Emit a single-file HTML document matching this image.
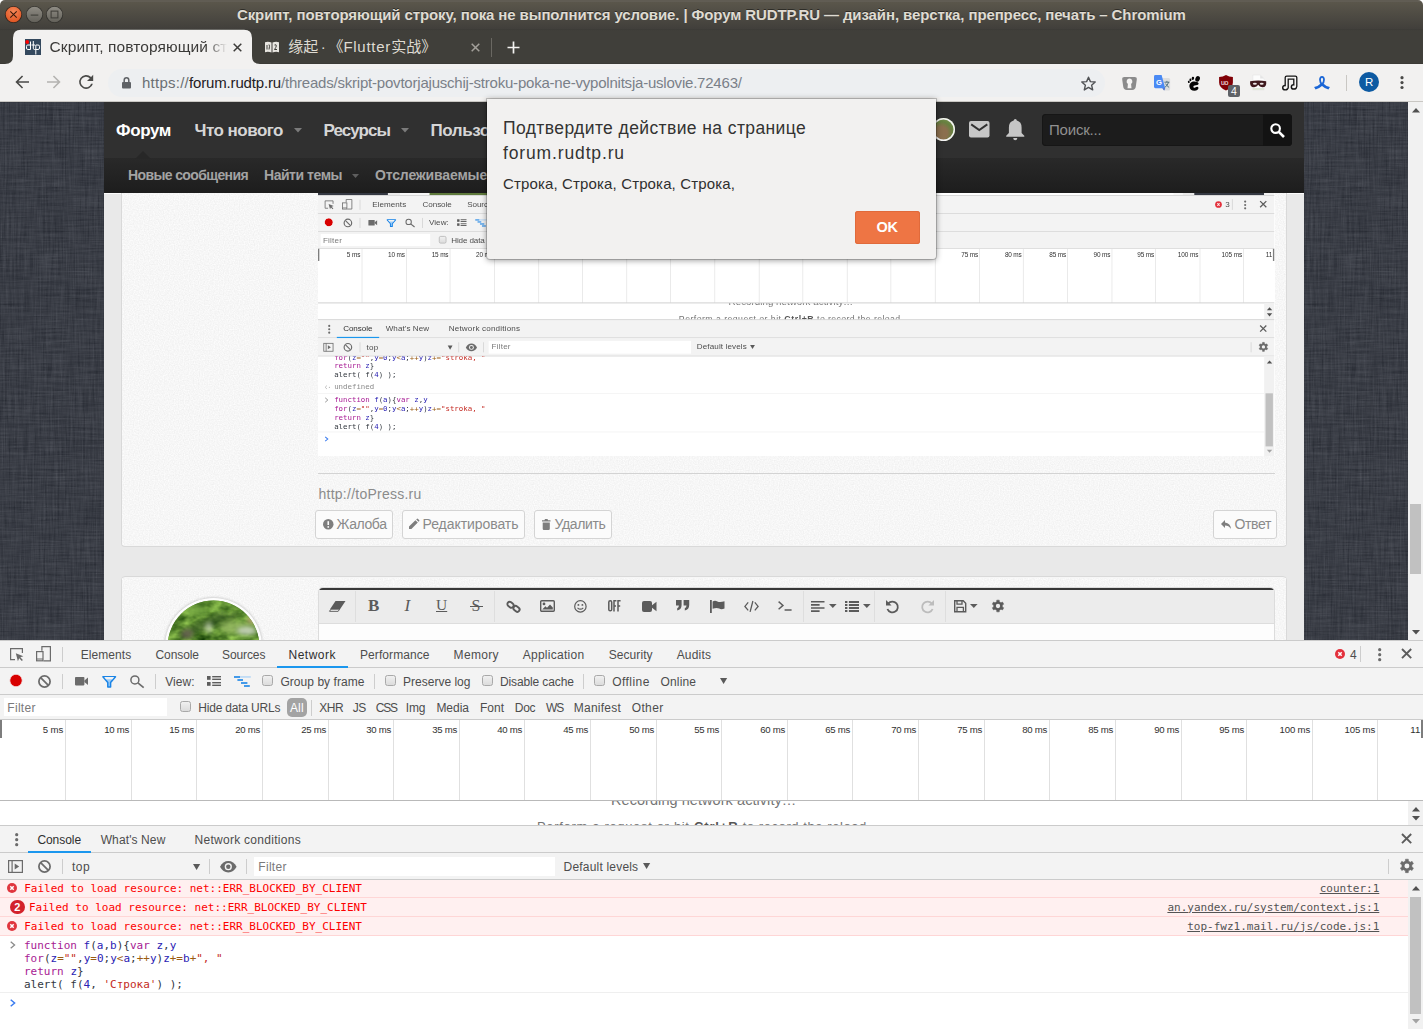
<!DOCTYPE html>
<html lang='ru'><head><meta charset='utf-8'><title>Скрипт, повторяющий строку, пока не выполнится условие. | Форум RUDTP.RU</title><style>
html,body{margin:0;padding:0}
body{width:1423px;height:1029px;overflow:hidden;position:relative;background:#fff;font-family:"Liberation Sans","Noto Sans CJK SC",sans-serif;-webkit-font-smoothing:antialiased}
.a{position:absolute}
.t{position:absolute;white-space:pre;line-height:20px;height:20px}
.m{font-family:"DejaVu Sans Mono","Liberation Mono",monospace;font-size:11px}
svg{overflow:visible}
.emb .t{margin-top:-1.1px}
.emb .t.m{margin-top:-.3px}
</style></head><body>
<div class=a style='left:0px;top:102px;width:1408px;height:540px;background:#383c46;'></div>
<svg class=a style='left:0px;top:102px;' width='104' height='538' viewBox='0 0 104 538'><filter id='ln0' x='0' y='0' width='100%' height='100%' color-interpolation-filters='sRGB'><feTurbulence type='fractalNoise' baseFrequency='0.55 0.028' numOctaves='4' seed='4' result='v'/><feTurbulence type='fractalNoise' baseFrequency='0.028 0.55' numOctaves='4' seed='9' result='h'/><feComposite in='v' in2='h' operator='arithmetic' k1='0' k2='.5' k3='.5' k4='0'/><feColorMatrix type='matrix' values='0.21 0 0 0 0.121 0.21 0 0 0 0.134 0.21 0 0 0 0.167 0 0 0 0 1'/></filter><rect width='104' height='538' filter='url(#ln0)'/></svg>
<svg class=a style='left:1304px;top:102px;' width='104' height='538' viewBox='0 0 104 538'><filter id='ln1304' x='0' y='0' width='100%' height='100%' color-interpolation-filters='sRGB'><feTurbulence type='fractalNoise' baseFrequency='0.55 0.028' numOctaves='4' seed='4' result='v'/><feTurbulence type='fractalNoise' baseFrequency='0.028 0.55' numOctaves='4' seed='9' result='h'/><feComposite in='v' in2='h' operator='arithmetic' k1='0' k2='.5' k3='.5' k4='0'/><feColorMatrix type='matrix' values='0.21 0 0 0 0.121 0.21 0 0 0 0.134 0.21 0 0 0 0.167 0 0 0 0 1'/></filter><rect width='104' height='538' filter='url(#ln1304)'/></svg>
<div class=a style='left:1408px;top:102px;width:15px;height:538px;background:#f1f1f1;'></div><svg class=a style='left:1411.5px;top:108px;' width='8' height='4.5' viewBox='0 0 8 4.5'><path d='M0 4.5L4 0 8 4.5Z' fill='#505050'/></svg><svg class=a style='left:1411.5px;top:629.5px;' width='8' height='4.5' viewBox='0 0 8 4.5'><path d='M0 0L4 4.5 8 0Z' fill='#505050'/></svg><div class=a style='left:1410px;top:504px;width:11px;height:70px;background:#c1c1c1;'></div>
<div class=a style='left:104px;top:102px;width:1200px;height:56px;background:#303030;'></div>
<div class=a style='left:104px;top:158px;width:1200px;height:34.5px;background:linear-gradient(#292929,#1d1d1d);'></div>
<span class=t style='left:116px;top:120.6px;font-size:17px;font-weight:700;color:#fff;letter-spacing:-0.38px;'>Форум</span>
<span class=t style='left:194.5px;top:120.6px;font-size:17px;font-weight:700;color:#d6d6d6;letter-spacing:-0.52px;'>Что нового</span>
<span class=t style='left:323.5px;top:120.6px;font-size:17px;font-weight:700;color:#d6d6d6;letter-spacing:-0.96px;'>Ресурсы</span>
<span class=t style='left:430.5px;top:120.6px;font-size:17px;font-weight:700;color:#d6d6d6;letter-spacing:-0.42px;'>Пользователи</span>
<svg class=a style='left:294px;top:128px;' width='8' height='4.5' viewBox='0 0 8 4.5'><path d='M0 0L4 4.5 8 0Z' fill='#7b7b7b'/></svg>
<svg class=a style='left:401px;top:128px;' width='8' height='4.5' viewBox='0 0 8 4.5'><path d='M0 0L4 4.5 8 0Z' fill='#7b7b7b'/></svg>
<svg class=a style='left:135px;top:150.5px;' width='16' height='8' viewBox='0 0 16 8'><path d='M0 8L8 0 16 8Z' fill='#272727'/></svg>
<span class=t style='left:128px;top:165.4px;font-size:14px;font-weight:700;color:#a3a3a3;letter-spacing:-0.62px;'>Новые сообщения</span>
<span class=t style='left:264px;top:165.4px;font-size:14px;font-weight:700;color:#a3a3a3;letter-spacing:-0.46px;'>Найти темы</span>
<svg class=a style='left:351.5px;top:173.5px;' width='7' height='4' viewBox='0 0 7 4'><path d='M0 0L3.5 4 7 0Z' fill='#5e5e5e'/></svg>
<span class=t style='left:375px;top:165.4px;font-size:14px;font-weight:700;color:#a3a3a3;letter-spacing:-0.16px;'>Отслеживаемые</span>
<div class=a style='left:932px;top:118px;width:23px;height:23px;background:#6f7f4a;border-radius:50%;box-shadow:0 0 0 1.5px #f4f4f4 inset;background:radial-gradient(circle at 40% 65%,#8b6f4e 0 30%,#66803f 55%,#8fa565 100%)'></div>
<svg class=a style='left:968.5px;top:120.5px;' width='20.5' height='16.5' viewBox='0 0 20.5 16.5'><path d='M2 0H18.5Q20.5 0 20.5 2V14.5Q20.5 16.5 18.5 16.5H2Q0 16.5 0 14.5V2Q0 0 2 0Z' fill='#c6c6c6'/><path d='M2.2 3.4L10.25 9 18.3 3.4' fill='none' stroke='#303030' stroke-width='1.9'/></svg>
<svg class=a style='left:1006px;top:118.5px;' width='18.5' height='21.5' viewBox='0 0 18.5 21.5'><path d='M9.25 0Q10.8 0 10.8 1.6Q15.6 2.8 15.6 8.6V14L18.3 16.7V17.7H.2V16.7L2.9 14V8.6Q2.9 2.8 7.7 1.6Q7.7 0 9.25 0ZM7.2 19H11.3Q11.2 21.3 9.25 21.3Q7.3 21.3 7.2 19Z' fill='#c6c6c6'/></svg>
<div class=a style='left:1042px;top:114px;width:250px;height:31.5px;background:#1c1c1c;border-radius:4px;box-shadow:0 0 0 1px #161616 inset'></div>
<div class=a style='left:1263px;top:114px;width:29px;height:31.5px;background:#131313;border-radius:0 4px 4px 0'></div>
<span class=t style='left:1049px;top:120px;font-size:15px;color:#909090;letter-spacing:-0.20px;'>Поиск...</span>
<svg class=a style='left:1269.5px;top:122.5px;' width='15' height='15' viewBox='0 0 15 15'><circle cx='5.6' cy='5.6' r='4.3' fill='none' stroke='#fff' stroke-width='2.1'/><path d='M8.8 8.8L14 14' stroke='#fff' stroke-width='2.6'/></svg>
<div class=a style='left:104px;top:192.5px;width:1200px;height:449px;background:#e9e9e9;'></div>
<div class=a style='left:104px;top:192.5px;width:1200px;height:1px;background:#fdfdfd;'></div>
<div class=a style='left:121px;top:193px;width:1166px;height:354px;background:#f6f6f6;border:1px solid #d9d9d9;box-sizing:border-box;border-top:0;border-radius:0 0 4px 4px'></div>
<svg class=a style='left:122px;top:193px;' width='1164' height='352' viewBox='0 0 1164 352'><filter id='ppa' x='0' y='0' width='100%' height='100%' color-interpolation-filters='sRGB'><feTurbulence type='fractalNoise' baseFrequency='0.8' numOctaves='1' seed='3'/><feColorMatrix type='matrix' values='0.09 0 0 0 0.921 0.09 0 0 0 0.921 0.09 0 0 0 0.921 0 0 0 0 1'/></filter><rect width='1164' height='352' filter='url(#ppa)'/></svg>
<div class=a style='left:318.3px;top:192.5px;width:956.3px;height:263.5px;overflow:hidden;background:#fff'><div class='a emb' style='left:0;top:-427.716px;width:1423px;height:1029px;transform:scale(0.672);transform-origin:0 0'><div class=a style='left:0px;top:630px;width:1408px;height:11px;background:#353943;'></div><div class=a style='left:104px;top:630px;width:1200px;height:11px;background:#e9e9e9;'></div><div class=a style='left:121.5px;top:630px;width:1165px;height:11px;background:#f6f6f6;'></div><div class=a style='left:166px;top:630px;width:95px;height:11px;background:#5f7a3c;'></div><div class=a style='left:319px;top:630px;width:954px;height:11px;background:#fff;'></div><div class=a style='left:1408px;top:630px;width:15px;height:11px;background:#f1f1f1;'></div><div class=a style='left:0px;top:640px;width:1423px;height:389px;background:#fff;'></div>
<div class=a style='left:0px;top:640px;width:1423px;height:28px;background:#f3f3f3;'></div>
<div class=a style='left:0px;top:640px;width:1423px;height:1px;background:#cbcbcb;'></div>
<div class=a style='left:0px;top:667px;width:1423px;height:1px;background:#cbcbcb;'></div>
<svg class=a style='left:9.5px;top:648px;' width='14' height='13' viewBox='0 0 14 13'><path d='M12.4 5V.6H.6V11.6H5' fill='none' stroke='#6b6b6b' stroke-width='1.2'/><path d='M5.8 5.2L13.4 8.2 10.3 9.3 12.9 12 11.8 13 9.2 10.3 7.9 13.2Z' fill='#6b6b6b'/></svg>
<svg class=a style='left:36px;top:646px;' width='15' height='15.5' viewBox='0 0 15 15.5'><path d='M5.9 4.8V.6H14.4V14.8H7.6' fill='none' stroke='#6b6b6b' stroke-width='1.2'/><rect x='.6' y='5.6' width='6.4' height='9.2' fill='none' stroke='#6b6b6b' stroke-width='1.2'/><path d='M.6 13H7' stroke='#6b6b6b' stroke-width='1'/></svg>
<div class=a style='left:62px;top:646.5px;width:1px;height:15px;background:#cdcdcd;'></div>
<span class=t style='left:80.7px;top:644.5px;font-size:12px;color:#4d4d4d;letter-spacing:0.07px;'>Elements</span>
<span class=t style='left:155.5px;top:644.5px;font-size:12px;color:#4d4d4d;letter-spacing:-0.08px;'>Console</span>
<span class=t style='left:222px;top:644.5px;font-size:12px;color:#4d4d4d;letter-spacing:-0.10px;'>Sources</span>
<span class=t style='left:288.5px;top:644.5px;font-size:12px;color:#2f2f2f;letter-spacing:0.50px;'>Network</span>
<span class=t style='left:360px;top:644.5px;font-size:12px;color:#4d4d4d;letter-spacing:0.08px;'>Performance</span>
<span class=t style='left:453.6px;top:644.5px;font-size:12px;color:#4d4d4d;letter-spacing:0.33px;'>Memory</span>
<span class=t style='left:522.7px;top:644.5px;font-size:12px;color:#4d4d4d;letter-spacing:0.27px;'>Application</span>
<span class=t style='left:608.7px;top:644.5px;font-size:12px;color:#4d4d4d;letter-spacing:0.08px;'>Security</span>
<span class=t style='left:676.7px;top:644.5px;font-size:12px;color:#4d4d4d;letter-spacing:0.17px;'>Audits</span>
<div class=a style='left:277px;top:666px;width:71px;height:2px;background:#1b97ee;'></div>
<svg class=a style='left:1334.8px;top:649.3px;' width='10' height='10' viewBox='0 0 10 10'><circle cx='5' cy='5' r='5' fill='#e3313c'/><path d='M3.3 3.3L6.7 6.7M6.7 3.3L3.3 6.7' stroke='#fff' stroke-width='1.5' fill='none'/></svg>
<span class=t style='left:1350px;top:644.6px;font-size:12px;color:#4d4d4d;'>3</span>
<div class=a style='left:1360px;top:646.3px;width:1px;height:15.5px;background:#cdcdcd;'></div>
<svg class=a style='left:1377.8px;top:647.8px;' width='3.4' height='13.4' viewBox='0 0 3.4 13.4'><circle cx='1.7' cy='1.7' r='1.6' fill='#6b6b6b'/><circle cx='1.7' cy='6.7' r='1.6' fill='#6b6b6b'/><circle cx='1.7' cy='11.7' r='1.6' fill='#6b6b6b'/></svg>
<svg class=a style='left:1402.4px;top:649.4px;' width='9.2' height='9.2' viewBox='0 0 9.2 9.2'><path d='M0 0L9.2 9.2M9.2 0L0 9.2' stroke='#5c5c5c' stroke-width='1.9' fill='none'/></svg>
<div class=a style='left:0px;top:668px;width:1423px;height:26px;background:#f3f3f3;'></div>
<div class=a style='left:0px;top:694px;width:1423px;height:1px;background:#cbcbcb;'></div>
<div class=a style='left:9.4px;top:674.2px;width:13.2px;height:13.2px;background:radial-gradient(circle,#d80000 0 5.3px,rgba(235,90,90,.45) 5.9px,rgba(240,120,120,0) 6.8px);'></div>
<svg class=a style='left:37.9px;top:674.8px;' width='13' height='13' viewBox='0 0 13 13'><circle cx='6.5' cy='6.5' r='5.6' fill='none' stroke='#6b6b6b' stroke-width='1.75'/><path d='M2.6 2.6L10.4 10.4' stroke='#6b6b6b' stroke-width='1.75'/></svg>
<div class=a style='left:62px;top:673.5px;width:1px;height:15.5px;background:#cdcdcd;'></div>
<svg class=a style='left:75px;top:677px;' width='13' height='8.4' viewBox='0 0 13 8.4'><rect width='9.4' height='8.4' rx='.8' fill='#6b6b6b'/><path d='M9.4 3.4L13 .5V7.9L9.4 5Z' fill='#6b6b6b'/></svg>
<svg class=a style='left:101.8px;top:676px;' width='14.4' height='11.6' viewBox='0 0 14.4 11.6'><path d='M.9 .8H13.5L8.6 6.6V10.9H5.8V6.6Z' fill='#9cccf8' stroke='#1a84e6' stroke-width='1.5' stroke-linejoin='round'/><path d='M2.2 1.1H12.2L10.4 3.2H4Z' fill='#f3f3f3'/></svg>
<svg class=a style='left:129.5px;top:675.3px;' width='14.5' height='13.2' viewBox='0 0 14.5 13.2'><circle cx='4.9' cy='4.9' r='4' fill='none' stroke='#6b6b6b' stroke-width='1.5'/><path d='M7.9 7.9L13.7 12.6' stroke='#6b6b6b' stroke-width='1.7'/></svg>
<div class=a style='left:155px;top:673.5px;width:1px;height:15.5px;background:#cdcdcd;'></div>
<span class=t style='left:165.2px;top:671.8px;font-size:12px;color:#4d4d4d;letter-spacing:0.07px;'>View:</span>
<svg class=a style='left:207px;top:676.1px;' width='14' height='10' viewBox='0 0 14 10'><g fill='#5d5d5d'><rect width='3.6' height='3.8'/><rect y='6' width='3.6' height='3.8'/><rect x='5.2' y='0' width='8.8' height='1.4'/><rect x='5.2' y='2.6' width='8.8' height='1.4'/><rect x='5.2' y='6' width='8.8' height='1.4'/><rect x='5.2' y='8.6' width='8.8' height='1.4'/></g></svg>
<svg class=a style='left:234px;top:675.9px;' width='17' height='11' viewBox='0 0 17 11'><rect x='5.8' y='.2' width='11' height='1.5' fill='#b5d6f5'/><g fill='#1a84e6'><rect x='0' y='.2' width='6' height='1.6'/><rect x='3.4' y='3.2' width='5.6' height='1.6'/><rect x='7' y='6.2' width='6.4' height='1.6'/><rect x='10' y='9.2' width='5.8' height='1.6'/></g></svg>
<div class=a style='left:262.1px;top:675.4px;width:10.5px;height:10.5px;background:linear-gradient(#f0f0f0,#dcdcdc);border:1px solid #a9a9a9;box-sizing:border-box;border-radius:2.5px'></div>
<span class=t style='left:280.4px;top:671.8px;font-size:12px;color:#4d4d4d;letter-spacing:0.05px;'>Group by frame</span>
<div class=a style='left:374px;top:673.5px;width:1px;height:15.5px;background:#cdcdcd;'></div>
<div class=a style='left:385.3px;top:675.4px;width:10.5px;height:10.5px;background:linear-gradient(#f0f0f0,#dcdcdc);border:1px solid #a9a9a9;box-sizing:border-box;border-radius:2.5px'></div>
<span class=t style='left:403px;top:671.8px;font-size:12px;color:#4d4d4d;letter-spacing:0.01px;'>Preserve log</span>
<div class=a style='left:482.3px;top:675.4px;width:10.5px;height:10.5px;background:linear-gradient(#f0f0f0,#dcdcdc);border:1px solid #a9a9a9;box-sizing:border-box;border-radius:2.5px'></div>
<span class=t style='left:499.9px;top:671.8px;font-size:12px;color:#4d4d4d;letter-spacing:-0.11px;'>Disable cache</span>
<div class=a style='left:583px;top:673.5px;width:1px;height:15.5px;background:#cdcdcd;'></div>
<div class=a style='left:594.1px;top:675.4px;width:10.5px;height:10.5px;background:linear-gradient(#f0f0f0,#dcdcdc);border:1px solid #a9a9a9;box-sizing:border-box;border-radius:2.5px'></div>
<span class=t style='left:612.2px;top:671.8px;font-size:12px;color:#4d4d4d;letter-spacing:0.46px;'>Offline</span>
<span class=t style='left:660.5px;top:671.8px;font-size:12px;color:#4d4d4d;letter-spacing:0.17px;'>Online</span>
<svg class=a style='left:719.5px;top:678.3px;' width='7.2' height='6' viewBox='0 0 7.2 6'><path d='M0 0H7.2L3.6 6Z' fill='#5a5a5a'/></svg>
<div class=a style='left:0px;top:695px;width:1423px;height:25px;background:#f3f3f3;'></div>
<div class=a style='left:0px;top:719px;width:1423px;height:1px;background:#cbcbcb;'></div>
<div class=a style='left:4px;top:698px;width:163px;height:18px;background:#fff;'></div>
<span class=t style='left:7.3px;top:697.9px;font-size:12px;color:#7a7a7a;letter-spacing:0.30px;'>Filter</span>
<div class=a style='left:180.3px;top:701.2px;width:10.5px;height:10.5px;background:linear-gradient(#f0f0f0,#dcdcdc);border:1px solid #a9a9a9;box-sizing:border-box;border-radius:2.5px'></div>
<span class=t style='left:198.3px;top:697.9px;font-size:12px;color:#4d4d4d;letter-spacing:-0.19px;'>Hide data URLs</span>
<div class=a style='left:287.2px;top:698.2px;width:19.6px;height:18.6px;background:#a3a3a3;border-radius:5px'></div>
<span class=t style='left:289.9px;top:697.9px;font-size:12px;color:#fff;letter-spacing:0.19px;'>All</span>
<div class=a style='left:311px;top:699.5px;width:1px;height:16px;background:#cdcdcd;'></div>
<span class=t style='left:319.3px;top:697.9px;font-size:12px;color:#4d4d4d;letter-spacing:-0.48px;'>XHR</span>
<span class=t style='left:352.8px;top:697.9px;font-size:12px;color:#4d4d4d;letter-spacing:-0.66px;'>JS</span>
<span class=t style='left:375.7px;top:697.9px;font-size:12px;color:#4d4d4d;letter-spacing:-1.20px;'>CSS</span>
<span class=t style='left:405.8px;top:697.9px;font-size:12px;color:#4d4d4d;letter-spacing:-0.17px;'>Img</span>
<span class=t style='left:436.4px;top:697.9px;font-size:12px;color:#4d4d4d;letter-spacing:-0.02px;'>Media</span>
<span class=t style='left:479.9px;top:697.9px;font-size:12px;color:#4d4d4d;letter-spacing:0.07px;'>Font</span>
<span class=t style='left:514.8px;top:697.9px;font-size:12px;color:#4d4d4d;letter-spacing:-0.28px;'>Doc</span>
<span class=t style='left:545.9px;top:697.9px;font-size:12px;color:#4d4d4d;letter-spacing:-1.07px;'>WS</span>
<span class=t style='left:573.8px;top:697.9px;font-size:12px;color:#4d4d4d;letter-spacing:0.24px;'>Manifest</span>
<span class=t style='left:631.7px;top:697.9px;font-size:12px;color:#4d4d4d;letter-spacing:0.38px;'>Other</span>
<div class=a style='left:0px;top:720px;width:1423px;height:80px;background:#fff;'></div>
<div class=a style='left:65px;top:720px;width:1px;height:80px;background:#e0e0e0;'></div>
<span class=t style='left:42.8px;top:719.7px;font-size:9.6px;color:#303030;letter-spacing:-0.12px;'>5 ms</span>
<div class=a style='left:131px;top:720px;width:1px;height:80px;background:#e0e0e0;'></div>
<span class=t style='left:104.2px;top:719.7px;font-size:9.6px;color:#303030;letter-spacing:-0.25px;'>10 ms</span>
<div class=a style='left:196px;top:720px;width:1px;height:80px;background:#e0e0e0;'></div>
<span class=t style='left:169.2px;top:719.7px;font-size:9.6px;color:#303030;letter-spacing:-0.25px;'>15 ms</span>
<div class=a style='left:262px;top:720px;width:1px;height:80px;background:#e0e0e0;'></div>
<span class=t style='left:235.2px;top:719.7px;font-size:9.6px;color:#303030;letter-spacing:-0.25px;'>20 ms</span>
<div class=a style='left:328px;top:720px;width:1px;height:80px;background:#e0e0e0;'></div>
<span class=t style='left:301.2px;top:719.7px;font-size:9.6px;color:#303030;letter-spacing:-0.25px;'>25 ms</span>
<div class=a style='left:393px;top:720px;width:1px;height:80px;background:#e0e0e0;'></div>
<span class=t style='left:366.2px;top:719.7px;font-size:9.6px;color:#303030;letter-spacing:-0.25px;'>30 ms</span>
<div class=a style='left:459px;top:720px;width:1px;height:80px;background:#e0e0e0;'></div>
<span class=t style='left:432.2px;top:719.7px;font-size:9.6px;color:#303030;letter-spacing:-0.25px;'>35 ms</span>
<div class=a style='left:524px;top:720px;width:1px;height:80px;background:#e0e0e0;'></div>
<span class=t style='left:497.2px;top:719.7px;font-size:9.6px;color:#303030;letter-spacing:-0.25px;'>40 ms</span>
<div class=a style='left:590px;top:720px;width:1px;height:80px;background:#e0e0e0;'></div>
<span class=t style='left:563.2px;top:719.7px;font-size:9.6px;color:#303030;letter-spacing:-0.25px;'>45 ms</span>
<div class=a style='left:656px;top:720px;width:1px;height:80px;background:#e0e0e0;'></div>
<span class=t style='left:629.2px;top:719.7px;font-size:9.6px;color:#303030;letter-spacing:-0.25px;'>50 ms</span>
<div class=a style='left:721px;top:720px;width:1px;height:80px;background:#e0e0e0;'></div>
<span class=t style='left:694.2px;top:719.7px;font-size:9.6px;color:#303030;letter-spacing:-0.25px;'>55 ms</span>
<div class=a style='left:787px;top:720px;width:1px;height:80px;background:#e0e0e0;'></div>
<span class=t style='left:760.2px;top:719.7px;font-size:9.6px;color:#303030;letter-spacing:-0.25px;'>60 ms</span>
<div class=a style='left:852px;top:720px;width:1px;height:80px;background:#e0e0e0;'></div>
<span class=t style='left:825.2px;top:719.7px;font-size:9.6px;color:#303030;letter-spacing:-0.25px;'>65 ms</span>
<div class=a style='left:918px;top:720px;width:1px;height:80px;background:#e0e0e0;'></div>
<span class=t style='left:891.2px;top:719.7px;font-size:9.6px;color:#303030;letter-spacing:-0.25px;'>70 ms</span>
<div class=a style='left:984px;top:720px;width:1px;height:80px;background:#e0e0e0;'></div>
<span class=t style='left:957.2px;top:719.7px;font-size:9.6px;color:#303030;letter-spacing:-0.25px;'>75 ms</span>
<div class=a style='left:1049px;top:720px;width:1px;height:80px;background:#e0e0e0;'></div>
<span class=t style='left:1022.2px;top:719.7px;font-size:9.6px;color:#303030;letter-spacing:-0.25px;'>80 ms</span>
<div class=a style='left:1115px;top:720px;width:1px;height:80px;background:#e0e0e0;'></div>
<span class=t style='left:1088.2px;top:719.7px;font-size:9.6px;color:#303030;letter-spacing:-0.25px;'>85 ms</span>
<div class=a style='left:1181px;top:720px;width:1px;height:80px;background:#e0e0e0;'></div>
<span class=t style='left:1154.2px;top:719.7px;font-size:9.6px;color:#303030;letter-spacing:-0.25px;'>90 ms</span>
<div class=a style='left:1246px;top:720px;width:1px;height:80px;background:#e0e0e0;'></div>
<span class=t style='left:1219.2px;top:719.7px;font-size:9.6px;color:#303030;letter-spacing:-0.25px;'>95 ms</span>
<div class=a style='left:1312px;top:720px;width:1px;height:80px;background:#e0e0e0;'></div>
<span class=t style='left:1279.5px;top:719.7px;font-size:9.6px;color:#303030;letter-spacing:-0.14px;'>100 ms</span>
<div class=a style='left:1377px;top:720px;width:1px;height:80px;background:#e0e0e0;'></div>
<span class=t style='left:1344.5px;top:719.7px;font-size:9.6px;color:#303030;letter-spacing:-0.14px;'>105 ms</span>
<span class=t style='left:1410.3px;top:719.7px;font-size:9.6px;color:#303030;letter-spacing:0.02px;'>11</span>
<div class=a style='left:0px;top:720px;width:1.7px;height:18px;background:#7d7d7d;'></div>
<div class=a style='left:1421.3px;top:720px;width:1.7px;height:18px;background:#7d7d7d;'></div>
<div class=a style='left:0px;top:800px;width:1423px;height:1px;background:#b9b9b9;'></div>
<div class=a style='left:0;top:801px;width:1408px;height:24.5px;overflow:hidden'><span class=t style='left:611px;top:-11.5px;font-size:14.5px;color:#757575;letter-spacing:0.06px;'>Recording network activity…</span><span class=t style='left:537px;top:15.5px;font-size:13px;color:#757575;letter-spacing:0.67px;'>Perform a request or hit </span><span class=t style='left:694px;top:15.5px;font-size:13px;font-weight:700;color:#555;letter-spacing:0.85px;'>Ctrl+R</span><span class=t style='left:738.5px;top:15.5px;font-size:13px;color:#757575;letter-spacing:0.57px;'> to record the reload.</span></div>
<div class=a style='left:1408px;top:801px;width:15px;height:24.5px;background:#f1f1f1;'></div>
<svg class=a style='left:1411.5px;top:806.5px;' width='8' height='4.5' viewBox='0 0 8 4.5'><path d='M0 4.5L4 0 8 4.5Z' fill='#505050'/></svg>
<svg class=a style='left:1411.5px;top:816px;' width='8' height='4.5' viewBox='0 0 8 4.5'><path d='M0 0L4 4.5 8 0Z' fill='#505050'/></svg>
<div class=a style='left:0px;top:825px;width:1423px;height:28px;background:#f3f3f3;'></div>
<div class=a style='left:0px;top:825px;width:1423px;height:1px;background:#cbcbcb;'></div>
<div class=a style='left:0px;top:852px;width:1423px;height:1px;background:#cbcbcb;'></div>
<svg class=a style='left:14.8px;top:833.1px;' width='3.4' height='13.4' viewBox='0 0 3.4 13.4'><circle cx='1.7' cy='1.7' r='1.6' fill='#6b6b6b'/><circle cx='1.7' cy='6.7' r='1.6' fill='#6b6b6b'/><circle cx='1.7' cy='11.7' r='1.6' fill='#6b6b6b'/></svg>
<span class=t style='left:37.4px;top:829.5px;font-size:12px;color:#2f2f2f;letter-spacing:-0.06px;'>Console</span>
<div class=a style='left:28px;top:851px;width:63px;height:2px;background:#1b97ee;'></div>
<span class=t style='left:100.7px;top:829.5px;font-size:12px;color:#4d4d4d;letter-spacing:0.11px;'>What&#x27;s New</span>
<span class=t style='left:194.5px;top:829.5px;font-size:12px;color:#4d4d4d;letter-spacing:0.28px;'>Network conditions</span>
<svg class=a style='left:1402.4px;top:834.3px;' width='9.2' height='9.2' viewBox='0 0 9.2 9.2'><path d='M0 0L9.2 9.2M9.2 0L0 9.2' stroke='#5c5c5c' stroke-width='1.9' fill='none'/></svg>
<div class=a style='left:0px;top:853px;width:1423px;height:26px;background:#f3f3f3;'></div>
<div class=a style='left:0px;top:879px;width:1423px;height:1px;background:#cbcbcb;'></div>
<svg class=a style='left:8px;top:859.8px;' width='15' height='13' viewBox='0 0 15 13'><rect x='.6' y='.6' width='13.8' height='11.8' fill='none' stroke='#6b6b6b' stroke-width='1.2'/><path d='M4.1 .6V12.4' stroke='#6b6b6b' stroke-width='1.2'/><path d='M6.7 3.6L11.2 6.5 6.7 9.4Z' fill='#6b6b6b'/></svg>
<svg class=a style='left:37.9px;top:859.9px;' width='13' height='13' viewBox='0 0 13 13'><circle cx='6.5' cy='6.5' r='5.6' fill='none' stroke='#6b6b6b' stroke-width='1.75'/><path d='M2.6 2.6L10.4 10.4' stroke='#6b6b6b' stroke-width='1.75'/></svg>
<div class=a style='left:62px;top:858.5px;width:1px;height:15.5px;background:#cdcdcd;'></div>
<span class=t style='left:72px;top:856.8px;font-size:12px;color:#4d4d4d;letter-spacing:0.54px;'>top</span>
<svg class=a style='left:192.5px;top:863.5px;' width='7.2' height='6' viewBox='0 0 7.2 6'><path d='M0 0H7.2L3.6 6Z' fill='#5a5a5a'/></svg>
<div class=a style='left:209px;top:858.5px;width:1px;height:15.5px;background:#cdcdcd;'></div>
<svg class=a style='left:219.5px;top:860.5px;' width='16.6' height='11.4' viewBox='0 0 16.6 11.4'><path d='M8.3 0Q13.6 0 16.6 5.7Q13.6 11.4 8.3 11.4Q3 11.4 0 5.7Q3 0 8.3 0Z' fill='#6b6b6b'/><circle cx='8.3' cy='5.7' r='3.6' fill='#f3f3f3'/><circle cx='8.3' cy='5.7' r='2.2' fill='#6b6b6b'/></svg>
<div class=a style='left:246px;top:858.5px;width:1px;height:15.5px;background:#cdcdcd;'></div>
<div class=a style='left:254px;top:857px;width:301px;height:19px;background:#fff;'></div>
<span class=t style='left:258.3px;top:856.5px;font-size:12px;color:#7a7a7a;letter-spacing:0.30px;'>Filter</span>
<span class=t style='left:563.6px;top:856.5px;font-size:12px;color:#4d4d4d;letter-spacing:0.19px;'>Default levels</span>
<svg class=a style='left:643.3px;top:863px;' width='7.2' height='6' viewBox='0 0 7.2 6'><path d='M0 0H7.2L3.6 6Z' fill='#5a5a5a'/></svg>
<div class=a style='left:1388px;top:858.5px;width:1px;height:15.5px;background:#cdcdcd;'></div>
<svg class=a style='left:1400.1px;top:859.1px;' width='13.8' height='13.8' viewBox='0 0 13.8 13.8'><path d='M5.47 0.15L8.33 0.15L8.43 2.03L10.36 3.14L12.03 2.28L13.46 4.77L11.88 5.79L11.88 8.01L13.46 9.03L12.03 11.52L10.36 10.66L8.43 11.77L8.33 13.65L5.47 13.65L5.37 11.77L3.44 10.66L1.77 11.52L0.34 9.03L1.92 8.01L1.92 5.79L0.34 4.77L1.77 2.28L3.44 3.14L5.37 2.03Z' fill='#6b6b6b' stroke='#6b6b6b' stroke-width='.5' stroke-linejoin='round'/><circle cx='6.9' cy='6.9' r='2.48' fill='#f3f3f3'/></svg>
<div class=a style='left:1408px;top:880px;width:15px;height:149px;background:#f1f1f1;'></div>
<svg class=a style='left:1411.5px;top:886px;' width='8' height='4.5' viewBox='0 0 8 4.5'><path d='M0 4.5L4 0 8 4.5Z' fill='#505050'/></svg>
<svg class=a style='left:1411.5px;top:1018.5px;' width='8' height='4.5' viewBox='0 0 8 4.5'><path d='M0 0L4 4.5 8 0Z' fill='#a3a3a3'/></svg>
<div class=a style='left:1410px;top:935px;width:11px;height:78.5px;background:#c1c1c1;'></div>
<div class=a style='left:0;top:880px;width:1408px;height:56px;overflow:hidden'><div class=a style='left:0;top:-880px'>
<span class='t m' style='left:24px;top:859.1px'><span style='color:#a71a93'>function</span><span style='color:#33383f'> </span><span style='color:#2a22b4'>f</span><span style='color:#33383f'>(</span><span style='color:#2a22b4'>a</span><span style='color:#33383f'>){</span><span style='color:#a71a93'>var</span><span style='color:#33383f'> </span><span style='color:#2a22b4'>z</span><span style='color:#33383f'>,</span><span style='color:#2a22b4'>y</span></span>
<span class='t m' style='left:24px;top:872.3px'><span style='color:#a71a93'>for</span><span style='color:#33383f'>(</span><span style='color:#2a22b4'>z</span><span style='color:#9a5b12'>=</span><span style='color:#c42a23'>""</span><span style='color:#33383f'>,</span><span style='color:#2a22b4'>y</span><span style='color:#9a5b12'>=</span><span style='color:#2a22b4'>0</span><span style='color:#33383f'>;</span><span style='color:#2a22b4'>y</span><span style='color:#9a5b12'>&lt;</span><span style='color:#2a22b4'>a</span><span style='color:#33383f'>;</span><span style='color:#9a5b12'>++</span><span style='color:#2a22b4'>y</span><span style='color:#33383f'>)</span><span style='color:#2a22b4'>z</span><span style='color:#9a5b12'>+=</span><span style='color:#c42a23'>"stroka, "</span></span>
<span class='t m' style='left:24px;top:885.5px'><span style='color:#a71a93'>return</span><span style='color:#33383f'> </span><span style='color:#2a22b4'>z</span><span style='color:#33383f'>}</span></span>
<span class='t m' style='left:24px;top:898.7px'><span style='color:#33383f'>alert( f(</span><span style='color:#2a22b4'>4</span><span style='color:#33383f'>) );</span></span>
</div></div>
<svg class=a style='left:9.5px;top:923px;' width='9' height='6' viewBox='0 0 9 6'><path d='M3.4 .4L.6 3 3.4 5.6' fill='none' stroke='#b0b0b0' stroke-width='1.1'/><circle cx='7' cy='3' r='.9' fill='#b0b0b0'/></svg>
<span class='t m' style='left:24px;top:916.5px'><span style='color:#8c8c8c'>undefined</span></span>
<span class='t m' style='left:24px;top:935.7px'><span style='color:#a71a93'>function</span><span style='color:#33383f'> </span><span style='color:#2a22b4'>f</span><span style='color:#33383f'>(</span><span style='color:#2a22b4'>a</span><span style='color:#33383f'>){</span><span style='color:#a71a93'>var</span><span style='color:#33383f'> </span><span style='color:#2a22b4'>z</span><span style='color:#33383f'>,</span><span style='color:#2a22b4'>y</span></span>
<span class='t m' style='left:24px;top:948.8px'><span style='color:#a71a93'>for</span><span style='color:#33383f'>(</span><span style='color:#2a22b4'>z</span><span style='color:#9a5b12'>=</span><span style='color:#c42a23'>""</span><span style='color:#33383f'>,</span><span style='color:#2a22b4'>y</span><span style='color:#9a5b12'>=</span><span style='color:#2a22b4'>0</span><span style='color:#33383f'>;</span><span style='color:#2a22b4'>y</span><span style='color:#9a5b12'>&lt;</span><span style='color:#2a22b4'>a</span><span style='color:#33383f'>;</span><span style='color:#9a5b12'>++</span><span style='color:#2a22b4'>y</span><span style='color:#33383f'>)</span><span style='color:#2a22b4'>z</span><span style='color:#9a5b12'>+=</span><span style='color:#c42a23'>"stroka, "</span></span>
<span class='t m' style='left:24px;top:961.9px'><span style='color:#a71a93'>return</span><span style='color:#33383f'> </span><span style='color:#2a22b4'>z</span><span style='color:#33383f'>}</span></span>
<span class='t m' style='left:24px;top:974.8px'><span style='color:#33383f'>alert( f(</span><span style='color:#2a22b4'>4</span><span style='color:#33383f'>) );</span></span>
<div class=a style='left:0px;top:935px;width:1408px;height:1px;background:#f0f0f0;'></div>
<svg class=a style='left:9.8px;top:941.4px;' width='5.6' height='8' viewBox='0 0 5.6 8'><path d='M.7 .7L4.6 4 .7 7.3' fill='none' stroke='#8a8a8a' stroke-width='1.3'/></svg>
<div class=a style='left:0px;top:992px;width:1408px;height:1px;background:#efefef;'></div>
<svg class=a style='left:9.8px;top:999px;' width='5.6' height='8' viewBox='0 0 5.6 8'><path d='M.7 .7L4.6 4 .7 7.3' fill='none' stroke='#3b7cf0' stroke-width='1.5'/></svg></div></div>
<div class=a style='left:318.3px;top:472.7px;width:956.3px;height:1px;background:#d3d3d3;'></div>
<span class=t style='left:318.5px;top:484px;font-size:14px;color:#8b8b8b;letter-spacing:0.25px;'>http://toPress.ru</span>
<div class=a style='left:315px;top:510px;width:78px;height:29px;background:#fbfbfb;border:1px solid #d4d4d4;box-sizing:border-box;border-radius:3px'></div><svg class=a style='left:322.5px;top:519px;' width='10.5' height='10.5' viewBox='0 0 10.5 10.5'><circle cx='5.25' cy='5.25' r='5.25' fill='#7e7e7e'/><path d='M5.25 2.2V6' stroke='#fbfbfb' stroke-width='1.6'/><circle cx='5.25' cy='7.9' r='.9' fill='#fbfbfb'/></svg><span class=t style='left:336.5px;top:514.2px;font-size:14px;color:#8a8a8a;letter-spacing:-0.41px;'>Жалоба</span>
<div class=a style='left:402px;top:510px;width:123px;height:29px;background:#fbfbfb;border:1px solid #d4d4d4;box-sizing:border-box;border-radius:3px'></div><svg class=a style='left:409px;top:519px;' width='10' height='10' viewBox='0 0 10 10'><path d='M0 10V7.6L6.4 1.2 8.8 3.6 2.4 10ZM7.2.4L8 -.3Q8.5-.6 9 -.1L10.1 1Q10.6 1.5 10.3 2L9.6 2.8Z' fill='#7e7e7e'/></svg><span class=t style='left:422.5px;top:514.2px;font-size:14px;color:#8a8a8a;letter-spacing:-0.06px;'>Редактировать</span>
<div class=a style='left:534px;top:510px;width:78px;height:29px;background:#fbfbfb;border:1px solid #d4d4d4;box-sizing:border-box;border-radius:3px'></div><svg class=a style='left:542px;top:518.5px;' width='8.5' height='11' viewBox='0 0 8.5 11'><path d='M0 1.2H2.4L3 0H5.5L6.1 1.2H8.5V2.6H0ZM.7 3.4H7.8V9.8Q7.8 11 6.6 11H1.9Q.7 11 .7 9.8Z' fill='#7e7e7e'/></svg><span class=t style='left:554.5px;top:514.2px;font-size:14px;color:#8a8a8a;letter-spacing:-0.35px;'>Удалить</span>
<div class=a style='left:1213px;top:510px;width:64px;height:29px;background:#fbfbfb;border:1px solid #d4d4d4;box-sizing:border-box;border-radius:3px'></div>
<svg class=a style='left:1221px;top:519.5px;' width='10' height='9' viewBox='0 0 10 9'><path d='M4 0V2.4Q9.6 3 10 9Q7.8 5.6 4 5.6V8L0 4Z' fill='#7e7e7e'/></svg>
<span class=t style='left:1234.5px;top:514.2px;font-size:14px;color:#8a8a8a;letter-spacing:-0.37px;'>Ответ</span>
<div class=a style='left:121px;top:576px;width:1166px;height:80px;background:#f6f6f6;border:1px solid #d9d9d9;box-sizing:border-box;border-radius:4px 4px 0 0'></div>
<svg class=a style='left:122px;top:578px;' width='1164' height='62' viewBox='0 0 1164 62'><filter id='ppb' x='0' y='0' width='100%' height='100%' color-interpolation-filters='sRGB'><feTurbulence type='fractalNoise' baseFrequency='0.8' numOctaves='1' seed='3'/><feColorMatrix type='matrix' values='0.09 0 0 0 0.921 0.09 0 0 0 0.921 0.09 0 0 0 0.921 0 0 0 0 1'/></filter><rect width='1164' height='62' filter='url(#ppb)'/></svg>
<svg class=a style='left:165px;top:597.7px;filter:drop-shadow(0 0 1.5px rgba(0,0,0,.28));' width='97' height='97' viewBox='0 0 97 97'><defs><clipPath id='cpa'><circle cx='48.5' cy='48.5' r='45.9'/></clipPath><filter id='msa' x='0' y='0' width='100%' height='100%' color-interpolation-filters='sRGB'><feTurbulence type='fractalNoise' baseFrequency='0.07 0.11' numOctaves='3' seed='11'/><feColorMatrix type='matrix' values='.75 0 0 0 -.02  .8 0 0 0 .14  .45 0 0 0 -.04  0 0 0 0 1'/></filter><filter id='bla'><feGaussianBlur stdDeviation='2.2'/></filter></defs><circle cx='48.5' cy='48.5' r='48.5' fill='#fdfdfd'/><g clip-path='url(#cpa)'><rect width='97' height='97' fill='#5f8c38'/><rect width='97' height='97' filter='url(#msa)' opacity='.9'/><g filter='url(#bla)'><ellipse cx='38' cy='27' rx='26' ry='5' fill='#3c5a24' opacity='.55' transform='rotate(-28 38 27)'/><ellipse cx='62' cy='22' rx='14' ry='4' fill='#3f5f27' opacity='.5' transform='rotate(-30 62 22)'/><ellipse cx='72' cy='30' rx='16' ry='6' fill='#a4c66e' opacity='.75'/><ellipse cx='82' cy='33' rx='10' ry='4' fill='#c9d3c2' opacity='.85'/><ellipse cx='44' cy='30' rx='3' ry='5' fill='#c4cfb8' opacity='.8'/><ellipse cx='88' cy='22' rx='6' ry='3' fill='#d9a98a' opacity='.8'/><ellipse cx='22' cy='36' rx='6' ry='5' fill='#6b5a58' opacity='.7'/><ellipse cx='30' cy='12' rx='12' ry='6' fill='#7fb048' opacity='.6'/></g></g></svg>
<div class=a style='left:318.5px;top:588px;width:955px;height:60px;background:#fdfdfd;border-radius:4px 4px 0 0;border-top:2px solid #383838;box-shadow:0 0 0 1px #dcdcdc'></div>
<div class=a style='left:318.5px;top:590px;width:955px;height:32.5px;background:#ececec;'></div>
<div class=a style='left:318.5px;top:622.5px;width:955px;height:1px;background:#dddddd;'></div>
<div class=a style='left:355px;top:591px;width:1px;height:31px;background:#dedede;'></div>
<div class=a style='left:494px;top:591px;width:1px;height:31px;background:#dedede;'></div>
<div class=a style='left:803px;top:591px;width:1px;height:31px;background:#dedede;'></div>
<div class=a style='left:874px;top:591px;width:1px;height:31px;background:#dedede;'></div>
<div class=a style='left:945px;top:591px;width:1px;height:31px;background:#dedede;'></div>
<svg class=a style='left:329.5px;top:600.5px;' width='15.5' height='11' viewBox='0 0 15.5 11'><path d='M5.5 0H15.5L10 8.2H0Z' fill='#5b5b5b'/><path d='M.9 8.2H9.6L8.2 10.3H-.5Z' fill='#fbfbfb' stroke='#5b5b5b' stroke-width='1'/></svg>
<span class=t style='left:368px;top:596px;font-size:17px;font-weight:700;font-family:"Liberation Serif",serif;color:#5b5b5b;'>B</span>
<span class=t style='left:404.5px;top:596px;font-size:17px;font-family:"Liberation Serif",serif;font-style:italic;color:#5b5b5b;'>I</span>
<span class=t style='left:436px;top:595.2px;font-size:15.5px;font-family:"Liberation Serif",serif;color:#5b5b5b;text-decoration:underline;'>U</span>
<span class=t style='left:471.5px;top:596px;font-size:16px;font-family:"Liberation Serif",serif;color:#5b5b5b;'>S</span>
<div class=a style='left:469.5px;top:606px;width:13.5px;height:1.2px;background:#5b5b5b;'></div>
<svg class=a style='left:506.5px;top:599.5px;' width='13' height='13' viewBox='0 0 13 13'><g fill='none' stroke='#5b5b5b' stroke-width='1.9'><rect x='.2' y='2.4' width='6.6' height='4.6' rx='2.3' transform='rotate(38 3.5 4.7)'/><rect x='6.2' y='6.6' width='6.6' height='4.6' rx='2.3' transform='rotate(38 9.5 8.9)'/></g></svg>
<svg class=a style='left:540px;top:600px;' width='15' height='12' viewBox='0 0 15 12'><rect x='.7' y='.7' width='13.6' height='10.6' rx='1' fill='none' stroke='#5b5b5b' stroke-width='1.4'/><circle cx='4' cy='3.9' r='1.4' fill='#5b5b5b'/><path d='M2.2 9.6L5.4 6.2 7 7.8 10 4.6 12.8 7.6V9.6Z' fill='#5b5b5b'/></svg>
<svg class=a style='left:574.3px;top:599.6px;' width='12.8' height='12.8' viewBox='0 0 12.8 12.8'><circle cx='6.4' cy='6.4' r='5.7' fill='none' stroke='#5b5b5b' stroke-width='1.2'/><circle cx='4.4' cy='4.9' r='.95' fill='#5b5b5b'/><circle cx='8.4' cy='4.9' r='.95' fill='#5b5b5b'/><path d='M3.5 7.8Q6.4 10.6 9.3 7.8' fill='none' stroke='#5b5b5b' stroke-width='1.1'/></svg>
<svg class=a style='left:608.4px;top:600.2px;' width='12.6' height='11.6' viewBox='0 0 12.6 11.6'><g fill='none' stroke='#5b5b5b' stroke-width='1.5'><rect x='.8' y='.8' width='2.9' height='10' rx='1.4'/><path d='M6 11.6V.8H8.4M6 6H8M10 11.6V.8H12.6M10 6H12.2'/></g></svg>
<svg class=a style='left:641.8px;top:600.5px;' width='14.5' height='11' viewBox='0 0 14.5 11'><rect width='10' height='11' rx='2' fill='#5b5b5b'/><path d='M10 4.2L14.5 .8V10.2L10 6.8Z' fill='#5b5b5b'/></svg>
<svg class=a style='left:676.4px;top:600.4px;' width='13.5' height='10.5' viewBox='0 0 13.5 10.5'><path d='M0 0H5.6V5Q5.6 9.6 1.2 10.4V8.2Q2.9 7.6 2.9 5.6H0Z' fill='#5b5b5b'/><g transform='translate(7.6 0)'><path d='M0 0H5.6V5Q5.6 9.6 1.2 10.4V8.2Q2.9 7.6 2.9 5.6H0Z' fill='#5b5b5b'/></g></svg>
<svg class=a style='left:710px;top:599.5px;' width='14.5' height='13' viewBox='0 0 14.5 13'><path d='M.9 0V13' stroke='#5b5b5b' stroke-width='1.8'/><path d='M2.6 1.4Q5 .2 7.4 1.4T14.5 1.2V8.4Q11.6 9.8 9.2 8.6T2.6 8.8Z' fill='#5b5b5b'/></svg>
<svg class=a style='left:744.2px;top:600.6px;' width='15' height='10.8' viewBox='0 0 15 10.8'><g fill='none' stroke='#5b5b5b' stroke-width='1.3'><path d='M4.2 1.4L.9 5.4 4.2 9.4M10.8 1.4L14.1 5.4 10.8 9.4M8.9 0L6.1 10.8'/></g></svg>
<svg class=a style='left:778.4px;top:601.4px;' width='13.6' height='9.6' viewBox='0 0 13.6 9.6'><g fill='none' stroke='#5b5b5b' stroke-width='1.4'><path d='M.6 .6L5 4.4 .6 8.2M6.6 9H13.6'/></g></svg>
<svg class=a style='left:811px;top:600.5px;' width='13.5' height='11' viewBox='0 0 13.5 11'><g stroke='#5b5b5b' stroke-width='1.6'><path d='M0 .8H13.5M0 3.9H8.6M0 7H13.5M0 10.1H8.6'/></g></svg>
<svg class=a style='left:828.5px;top:604px;' width='7.6' height='4' viewBox='0 0 7.6 4'><path d='M0 0L3.8 4 7.6 0Z' fill='#5b5b5b'/></svg>
<svg class=a style='left:845.2px;top:600.5px;' width='14' height='11' viewBox='0 0 14 11'><g stroke='#5b5b5b' stroke-width='1.9'><path d='M0 1H2.4M3.9 1H14M0 4H2.4M3.9 4H14M0 7H2.4M3.9 7H14M0 10H2.4M3.9 10H14'/></g></svg>
<svg class=a style='left:862.6px;top:604px;' width='7.6' height='4' viewBox='0 0 7.6 4'><path d='M0 0L3.8 4 7.6 0Z' fill='#5b5b5b'/></svg>
<svg class=a style='left:886px;top:599.8px;' width='13' height='12.6' viewBox='0 0 13 12.6'><path d='M2.2 3.6A5.4 5.4 0 1 1 1.4 9' fill='none' stroke='#5b5b5b' stroke-width='1.8'/><path d='M0 0V5.6H5.6Z' fill='#5b5b5b'/></svg>
<svg class=a style='left:920.6px;top:599.8px;' width='13' height='12.6' viewBox='0 0 13 12.6'><g transform='translate(13 0) scale(-1 1)'><path d='M2.2 3.6A5.4 5.4 0 1 1 1.4 9' fill='none' stroke='#bcbcbc' stroke-width='1.8'/><path d='M0 0V5.6H5.6Z' fill='#bcbcbc'/></g></svg>
<svg class=a style='left:954px;top:599.8px;' width='12.4' height='12.4' viewBox='0 0 12.4 12.4'><path d='M.7 .7H9.2L11.7 3.2V11.7H.7Z' fill='none' stroke='#5b5b5b' stroke-width='1.4'/><path d='M3 .7V4.2H8V.7M3 11.7V7.4H9.4V11.7' fill='none' stroke='#5b5b5b' stroke-width='1.3'/></svg>
<svg class=a style='left:970.2px;top:604px;' width='7.6' height='4' viewBox='0 0 7.6 4'><path d='M0 0L3.8 4 7.6 0Z' fill='#5b5b5b'/></svg>
<svg class=a style='left:992px;top:599.7px;' width='12' height='12' viewBox='0 0 12 12'><path d='M4.75 0.13L7.25 0.13L7.33 1.76L9.01 2.73L10.46 1.99L11.71 4.15L10.33 5.03L10.33 6.97L11.71 7.85L10.46 10.01L9.01 9.27L7.33 10.24L7.25 11.87L4.75 11.87L4.67 10.24L2.99 9.27L1.54 10.01L0.29 7.85L1.67 6.97L1.67 5.03L0.29 4.15L1.54 1.99L2.99 2.73L4.67 1.76Z' fill='#5b5b5b' stroke='#5b5b5b' stroke-width='.5' stroke-linejoin='round'/><circle cx='6' cy='6' r='2.16' fill='#ececec'/></svg>
<div class=a style='left:325px;top:630px;width:300px;height:11px;overflow:hidden'><span class=t style='left:6.3px;top:5.6px;font-size:15px;color:#141414;letter-spacing:-0.59px;'>[CODE]alert( f(4, &#x27;Строка&#x27;) );[/CODE]</span></div>
<div class=a style='left:0px;top:640px;width:1423px;height:389px;background:#fff;'></div>
<div class=a style='left:0px;top:640px;width:1423px;height:28px;background:#f3f3f3;'></div>
<div class=a style='left:0px;top:640px;width:1423px;height:1px;background:#cbcbcb;'></div>
<div class=a style='left:0px;top:667px;width:1423px;height:1px;background:#cbcbcb;'></div>
<svg class=a style='left:9.5px;top:648px;' width='14' height='13' viewBox='0 0 14 13'><path d='M12.4 5V.6H.6V11.6H5' fill='none' stroke='#6b6b6b' stroke-width='1.2'/><path d='M5.8 5.2L13.4 8.2 10.3 9.3 12.9 12 11.8 13 9.2 10.3 7.9 13.2Z' fill='#6b6b6b'/></svg>
<svg class=a style='left:36px;top:646px;' width='15' height='15.5' viewBox='0 0 15 15.5'><path d='M5.9 4.8V.6H14.4V14.8H7.6' fill='none' stroke='#6b6b6b' stroke-width='1.2'/><rect x='.6' y='5.6' width='6.4' height='9.2' fill='none' stroke='#6b6b6b' stroke-width='1.2'/><path d='M.6 13H7' stroke='#6b6b6b' stroke-width='1'/></svg>
<div class=a style='left:62px;top:646.5px;width:1px;height:15px;background:#cdcdcd;'></div>
<span class=t style='left:80.7px;top:644.5px;font-size:12px;color:#4d4d4d;letter-spacing:0.07px;'>Elements</span>
<span class=t style='left:155.5px;top:644.5px;font-size:12px;color:#4d4d4d;letter-spacing:-0.08px;'>Console</span>
<span class=t style='left:222px;top:644.5px;font-size:12px;color:#4d4d4d;letter-spacing:-0.10px;'>Sources</span>
<span class=t style='left:288.5px;top:644.5px;font-size:12px;color:#2f2f2f;letter-spacing:0.50px;'>Network</span>
<span class=t style='left:360px;top:644.5px;font-size:12px;color:#4d4d4d;letter-spacing:0.08px;'>Performance</span>
<span class=t style='left:453.6px;top:644.5px;font-size:12px;color:#4d4d4d;letter-spacing:0.33px;'>Memory</span>
<span class=t style='left:522.7px;top:644.5px;font-size:12px;color:#4d4d4d;letter-spacing:0.27px;'>Application</span>
<span class=t style='left:608.7px;top:644.5px;font-size:12px;color:#4d4d4d;letter-spacing:0.08px;'>Security</span>
<span class=t style='left:676.7px;top:644.5px;font-size:12px;color:#4d4d4d;letter-spacing:0.17px;'>Audits</span>
<div class=a style='left:277px;top:666px;width:71px;height:2px;background:#1b97ee;'></div>
<svg class=a style='left:1334.8px;top:649.3px;' width='10' height='10' viewBox='0 0 10 10'><circle cx='5' cy='5' r='5' fill='#e3313c'/><path d='M3.3 3.3L6.7 6.7M6.7 3.3L3.3 6.7' stroke='#fff' stroke-width='1.5' fill='none'/></svg>
<span class=t style='left:1350px;top:644.6px;font-size:12px;color:#4d4d4d;'>4</span>
<div class=a style='left:1360px;top:646.3px;width:1px;height:15.5px;background:#cdcdcd;'></div>
<svg class=a style='left:1377.8px;top:647.8px;' width='3.4' height='13.4' viewBox='0 0 3.4 13.4'><circle cx='1.7' cy='1.7' r='1.6' fill='#6b6b6b'/><circle cx='1.7' cy='6.7' r='1.6' fill='#6b6b6b'/><circle cx='1.7' cy='11.7' r='1.6' fill='#6b6b6b'/></svg>
<svg class=a style='left:1402.4px;top:649.4px;' width='9.2' height='9.2' viewBox='0 0 9.2 9.2'><path d='M0 0L9.2 9.2M9.2 0L0 9.2' stroke='#5c5c5c' stroke-width='1.9' fill='none'/></svg>
<div class=a style='left:0px;top:668px;width:1423px;height:26px;background:#f3f3f3;'></div>
<div class=a style='left:0px;top:694px;width:1423px;height:1px;background:#cbcbcb;'></div>
<div class=a style='left:9.4px;top:674.2px;width:13.2px;height:13.2px;background:radial-gradient(circle,#d80000 0 5.3px,rgba(235,90,90,.45) 5.9px,rgba(240,120,120,0) 6.8px);'></div>
<svg class=a style='left:37.9px;top:674.8px;' width='13' height='13' viewBox='0 0 13 13'><circle cx='6.5' cy='6.5' r='5.6' fill='none' stroke='#6b6b6b' stroke-width='1.75'/><path d='M2.6 2.6L10.4 10.4' stroke='#6b6b6b' stroke-width='1.75'/></svg>
<div class=a style='left:62px;top:673.5px;width:1px;height:15.5px;background:#cdcdcd;'></div>
<svg class=a style='left:75px;top:677px;' width='13' height='8.4' viewBox='0 0 13 8.4'><rect width='9.4' height='8.4' rx='.8' fill='#6b6b6b'/><path d='M9.4 3.4L13 .5V7.9L9.4 5Z' fill='#6b6b6b'/></svg>
<svg class=a style='left:101.8px;top:676px;' width='14.4' height='11.6' viewBox='0 0 14.4 11.6'><path d='M.9 .8H13.5L8.6 6.6V10.9H5.8V6.6Z' fill='#9cccf8' stroke='#1a84e6' stroke-width='1.5' stroke-linejoin='round'/><path d='M2.2 1.1H12.2L10.4 3.2H4Z' fill='#f3f3f3'/></svg>
<svg class=a style='left:129.5px;top:675.3px;' width='14.5' height='13.2' viewBox='0 0 14.5 13.2'><circle cx='4.9' cy='4.9' r='4' fill='none' stroke='#6b6b6b' stroke-width='1.5'/><path d='M7.9 7.9L13.7 12.6' stroke='#6b6b6b' stroke-width='1.7'/></svg>
<div class=a style='left:155px;top:673.5px;width:1px;height:15.5px;background:#cdcdcd;'></div>
<span class=t style='left:165.2px;top:671.8px;font-size:12px;color:#4d4d4d;letter-spacing:0.07px;'>View:</span>
<svg class=a style='left:207px;top:676.1px;' width='14' height='10' viewBox='0 0 14 10'><g fill='#5d5d5d'><rect width='3.6' height='3.8'/><rect y='6' width='3.6' height='3.8'/><rect x='5.2' y='0' width='8.8' height='1.4'/><rect x='5.2' y='2.6' width='8.8' height='1.4'/><rect x='5.2' y='6' width='8.8' height='1.4'/><rect x='5.2' y='8.6' width='8.8' height='1.4'/></g></svg>
<svg class=a style='left:234px;top:675.9px;' width='17' height='11' viewBox='0 0 17 11'><rect x='5.8' y='.2' width='11' height='1.5' fill='#b5d6f5'/><g fill='#1a84e6'><rect x='0' y='.2' width='6' height='1.6'/><rect x='3.4' y='3.2' width='5.6' height='1.6'/><rect x='7' y='6.2' width='6.4' height='1.6'/><rect x='10' y='9.2' width='5.8' height='1.6'/></g></svg>
<div class=a style='left:262.1px;top:675.4px;width:10.5px;height:10.5px;background:linear-gradient(#f0f0f0,#dcdcdc);border:1px solid #a9a9a9;box-sizing:border-box;border-radius:2.5px'></div>
<span class=t style='left:280.4px;top:671.8px;font-size:12px;color:#4d4d4d;letter-spacing:0.05px;'>Group by frame</span>
<div class=a style='left:374px;top:673.5px;width:1px;height:15.5px;background:#cdcdcd;'></div>
<div class=a style='left:385.3px;top:675.4px;width:10.5px;height:10.5px;background:linear-gradient(#f0f0f0,#dcdcdc);border:1px solid #a9a9a9;box-sizing:border-box;border-radius:2.5px'></div>
<span class=t style='left:403px;top:671.8px;font-size:12px;color:#4d4d4d;letter-spacing:0.01px;'>Preserve log</span>
<div class=a style='left:482.3px;top:675.4px;width:10.5px;height:10.5px;background:linear-gradient(#f0f0f0,#dcdcdc);border:1px solid #a9a9a9;box-sizing:border-box;border-radius:2.5px'></div>
<span class=t style='left:499.9px;top:671.8px;font-size:12px;color:#4d4d4d;letter-spacing:-0.11px;'>Disable cache</span>
<div class=a style='left:583px;top:673.5px;width:1px;height:15.5px;background:#cdcdcd;'></div>
<div class=a style='left:594.1px;top:675.4px;width:10.5px;height:10.5px;background:linear-gradient(#f0f0f0,#dcdcdc);border:1px solid #a9a9a9;box-sizing:border-box;border-radius:2.5px'></div>
<span class=t style='left:612.2px;top:671.8px;font-size:12px;color:#4d4d4d;letter-spacing:0.46px;'>Offline</span>
<span class=t style='left:660.5px;top:671.8px;font-size:12px;color:#4d4d4d;letter-spacing:0.17px;'>Online</span>
<svg class=a style='left:719.5px;top:678.3px;' width='7.2' height='6' viewBox='0 0 7.2 6'><path d='M0 0H7.2L3.6 6Z' fill='#5a5a5a'/></svg>
<div class=a style='left:0px;top:695px;width:1423px;height:25px;background:#f3f3f3;'></div>
<div class=a style='left:0px;top:719px;width:1423px;height:1px;background:#cbcbcb;'></div>
<div class=a style='left:4px;top:698px;width:163px;height:18px;background:#fff;'></div>
<span class=t style='left:7.3px;top:697.9px;font-size:12px;color:#7a7a7a;letter-spacing:0.30px;'>Filter</span>
<div class=a style='left:180.3px;top:701.2px;width:10.5px;height:10.5px;background:linear-gradient(#f0f0f0,#dcdcdc);border:1px solid #a9a9a9;box-sizing:border-box;border-radius:2.5px'></div>
<span class=t style='left:198.3px;top:697.9px;font-size:12px;color:#4d4d4d;letter-spacing:-0.19px;'>Hide data URLs</span>
<div class=a style='left:287.2px;top:698.2px;width:19.6px;height:18.6px;background:#a3a3a3;border-radius:5px'></div>
<span class=t style='left:289.9px;top:697.9px;font-size:12px;color:#fff;letter-spacing:0.19px;'>All</span>
<div class=a style='left:311px;top:699.5px;width:1px;height:16px;background:#cdcdcd;'></div>
<span class=t style='left:319.3px;top:697.9px;font-size:12px;color:#4d4d4d;letter-spacing:-0.48px;'>XHR</span>
<span class=t style='left:352.8px;top:697.9px;font-size:12px;color:#4d4d4d;letter-spacing:-0.66px;'>JS</span>
<span class=t style='left:375.7px;top:697.9px;font-size:12px;color:#4d4d4d;letter-spacing:-1.20px;'>CSS</span>
<span class=t style='left:405.8px;top:697.9px;font-size:12px;color:#4d4d4d;letter-spacing:-0.17px;'>Img</span>
<span class=t style='left:436.4px;top:697.9px;font-size:12px;color:#4d4d4d;letter-spacing:-0.02px;'>Media</span>
<span class=t style='left:479.9px;top:697.9px;font-size:12px;color:#4d4d4d;letter-spacing:0.07px;'>Font</span>
<span class=t style='left:514.8px;top:697.9px;font-size:12px;color:#4d4d4d;letter-spacing:-0.28px;'>Doc</span>
<span class=t style='left:545.9px;top:697.9px;font-size:12px;color:#4d4d4d;letter-spacing:-1.07px;'>WS</span>
<span class=t style='left:573.8px;top:697.9px;font-size:12px;color:#4d4d4d;letter-spacing:0.24px;'>Manifest</span>
<span class=t style='left:631.7px;top:697.9px;font-size:12px;color:#4d4d4d;letter-spacing:0.38px;'>Other</span>
<div class=a style='left:0px;top:720px;width:1423px;height:80px;background:#fff;'></div>
<div class=a style='left:65px;top:720px;width:1px;height:80px;background:#e0e0e0;'></div>
<span class=t style='left:42.8px;top:719.7px;font-size:9.6px;color:#303030;letter-spacing:-0.12px;'>5 ms</span>
<div class=a style='left:131px;top:720px;width:1px;height:80px;background:#e0e0e0;'></div>
<span class=t style='left:104.2px;top:719.7px;font-size:9.6px;color:#303030;letter-spacing:-0.25px;'>10 ms</span>
<div class=a style='left:196px;top:720px;width:1px;height:80px;background:#e0e0e0;'></div>
<span class=t style='left:169.2px;top:719.7px;font-size:9.6px;color:#303030;letter-spacing:-0.25px;'>15 ms</span>
<div class=a style='left:262px;top:720px;width:1px;height:80px;background:#e0e0e0;'></div>
<span class=t style='left:235.2px;top:719.7px;font-size:9.6px;color:#303030;letter-spacing:-0.25px;'>20 ms</span>
<div class=a style='left:328px;top:720px;width:1px;height:80px;background:#e0e0e0;'></div>
<span class=t style='left:301.2px;top:719.7px;font-size:9.6px;color:#303030;letter-spacing:-0.25px;'>25 ms</span>
<div class=a style='left:393px;top:720px;width:1px;height:80px;background:#e0e0e0;'></div>
<span class=t style='left:366.2px;top:719.7px;font-size:9.6px;color:#303030;letter-spacing:-0.25px;'>30 ms</span>
<div class=a style='left:459px;top:720px;width:1px;height:80px;background:#e0e0e0;'></div>
<span class=t style='left:432.2px;top:719.7px;font-size:9.6px;color:#303030;letter-spacing:-0.25px;'>35 ms</span>
<div class=a style='left:524px;top:720px;width:1px;height:80px;background:#e0e0e0;'></div>
<span class=t style='left:497.2px;top:719.7px;font-size:9.6px;color:#303030;letter-spacing:-0.25px;'>40 ms</span>
<div class=a style='left:590px;top:720px;width:1px;height:80px;background:#e0e0e0;'></div>
<span class=t style='left:563.2px;top:719.7px;font-size:9.6px;color:#303030;letter-spacing:-0.25px;'>45 ms</span>
<div class=a style='left:656px;top:720px;width:1px;height:80px;background:#e0e0e0;'></div>
<span class=t style='left:629.2px;top:719.7px;font-size:9.6px;color:#303030;letter-spacing:-0.25px;'>50 ms</span>
<div class=a style='left:721px;top:720px;width:1px;height:80px;background:#e0e0e0;'></div>
<span class=t style='left:694.2px;top:719.7px;font-size:9.6px;color:#303030;letter-spacing:-0.25px;'>55 ms</span>
<div class=a style='left:787px;top:720px;width:1px;height:80px;background:#e0e0e0;'></div>
<span class=t style='left:760.2px;top:719.7px;font-size:9.6px;color:#303030;letter-spacing:-0.25px;'>60 ms</span>
<div class=a style='left:852px;top:720px;width:1px;height:80px;background:#e0e0e0;'></div>
<span class=t style='left:825.2px;top:719.7px;font-size:9.6px;color:#303030;letter-spacing:-0.25px;'>65 ms</span>
<div class=a style='left:918px;top:720px;width:1px;height:80px;background:#e0e0e0;'></div>
<span class=t style='left:891.2px;top:719.7px;font-size:9.6px;color:#303030;letter-spacing:-0.25px;'>70 ms</span>
<div class=a style='left:984px;top:720px;width:1px;height:80px;background:#e0e0e0;'></div>
<span class=t style='left:957.2px;top:719.7px;font-size:9.6px;color:#303030;letter-spacing:-0.25px;'>75 ms</span>
<div class=a style='left:1049px;top:720px;width:1px;height:80px;background:#e0e0e0;'></div>
<span class=t style='left:1022.2px;top:719.7px;font-size:9.6px;color:#303030;letter-spacing:-0.25px;'>80 ms</span>
<div class=a style='left:1115px;top:720px;width:1px;height:80px;background:#e0e0e0;'></div>
<span class=t style='left:1088.2px;top:719.7px;font-size:9.6px;color:#303030;letter-spacing:-0.25px;'>85 ms</span>
<div class=a style='left:1181px;top:720px;width:1px;height:80px;background:#e0e0e0;'></div>
<span class=t style='left:1154.2px;top:719.7px;font-size:9.6px;color:#303030;letter-spacing:-0.25px;'>90 ms</span>
<div class=a style='left:1246px;top:720px;width:1px;height:80px;background:#e0e0e0;'></div>
<span class=t style='left:1219.2px;top:719.7px;font-size:9.6px;color:#303030;letter-spacing:-0.25px;'>95 ms</span>
<div class=a style='left:1312px;top:720px;width:1px;height:80px;background:#e0e0e0;'></div>
<span class=t style='left:1279.5px;top:719.7px;font-size:9.6px;color:#303030;letter-spacing:-0.14px;'>100 ms</span>
<div class=a style='left:1377px;top:720px;width:1px;height:80px;background:#e0e0e0;'></div>
<span class=t style='left:1344.5px;top:719.7px;font-size:9.6px;color:#303030;letter-spacing:-0.14px;'>105 ms</span>
<span class=t style='left:1410.3px;top:719.7px;font-size:9.6px;color:#303030;letter-spacing:0.02px;'>11</span>
<div class=a style='left:0px;top:720px;width:1.7px;height:18px;background:#7d7d7d;'></div>
<div class=a style='left:1421.3px;top:720px;width:1.7px;height:18px;background:#7d7d7d;'></div>
<div class=a style='left:0px;top:800px;width:1423px;height:1px;background:#b9b9b9;'></div>
<div class=a style='left:0;top:801px;width:1408px;height:24.5px;overflow:hidden'><span class=t style='left:611px;top:-11.5px;font-size:14.5px;color:#757575;letter-spacing:0.06px;'>Recording network activity…</span><span class=t style='left:537px;top:15.5px;font-size:13px;color:#757575;letter-spacing:0.67px;'>Perform a request or hit </span><span class=t style='left:694px;top:15.5px;font-size:13px;font-weight:700;color:#555;letter-spacing:0.85px;'>Ctrl+R</span><span class=t style='left:738.5px;top:15.5px;font-size:13px;color:#757575;letter-spacing:0.57px;'> to record the reload.</span></div>
<div class=a style='left:1408px;top:801px;width:15px;height:24.5px;background:#f1f1f1;'></div>
<svg class=a style='left:1411.5px;top:806.5px;' width='8' height='4.5' viewBox='0 0 8 4.5'><path d='M0 4.5L4 0 8 4.5Z' fill='#505050'/></svg>
<svg class=a style='left:1411.5px;top:816px;' width='8' height='4.5' viewBox='0 0 8 4.5'><path d='M0 0L4 4.5 8 0Z' fill='#505050'/></svg>
<div class=a style='left:0px;top:825px;width:1423px;height:28px;background:#f3f3f3;'></div>
<div class=a style='left:0px;top:825px;width:1423px;height:1px;background:#cbcbcb;'></div>
<div class=a style='left:0px;top:852px;width:1423px;height:1px;background:#cbcbcb;'></div>
<svg class=a style='left:14.8px;top:833.1px;' width='3.4' height='13.4' viewBox='0 0 3.4 13.4'><circle cx='1.7' cy='1.7' r='1.6' fill='#6b6b6b'/><circle cx='1.7' cy='6.7' r='1.6' fill='#6b6b6b'/><circle cx='1.7' cy='11.7' r='1.6' fill='#6b6b6b'/></svg>
<span class=t style='left:37.4px;top:829.5px;font-size:12px;color:#2f2f2f;letter-spacing:-0.06px;'>Console</span>
<div class=a style='left:28px;top:851px;width:63px;height:2px;background:#1b97ee;'></div>
<span class=t style='left:100.7px;top:829.5px;font-size:12px;color:#4d4d4d;letter-spacing:0.11px;'>What&#x27;s New</span>
<span class=t style='left:194.5px;top:829.5px;font-size:12px;color:#4d4d4d;letter-spacing:0.28px;'>Network conditions</span>
<svg class=a style='left:1402.4px;top:834.3px;' width='9.2' height='9.2' viewBox='0 0 9.2 9.2'><path d='M0 0L9.2 9.2M9.2 0L0 9.2' stroke='#5c5c5c' stroke-width='1.9' fill='none'/></svg>
<div class=a style='left:0px;top:853px;width:1423px;height:26px;background:#f3f3f3;'></div>
<div class=a style='left:0px;top:879px;width:1423px;height:1px;background:#cbcbcb;'></div>
<svg class=a style='left:8px;top:859.8px;' width='15' height='13' viewBox='0 0 15 13'><rect x='.6' y='.6' width='13.8' height='11.8' fill='none' stroke='#6b6b6b' stroke-width='1.2'/><path d='M4.1 .6V12.4' stroke='#6b6b6b' stroke-width='1.2'/><path d='M6.7 3.6L11.2 6.5 6.7 9.4Z' fill='#6b6b6b'/></svg>
<svg class=a style='left:37.9px;top:859.9px;' width='13' height='13' viewBox='0 0 13 13'><circle cx='6.5' cy='6.5' r='5.6' fill='none' stroke='#6b6b6b' stroke-width='1.75'/><path d='M2.6 2.6L10.4 10.4' stroke='#6b6b6b' stroke-width='1.75'/></svg>
<div class=a style='left:62px;top:858.5px;width:1px;height:15.5px;background:#cdcdcd;'></div>
<span class=t style='left:72px;top:856.8px;font-size:12px;color:#4d4d4d;letter-spacing:0.54px;'>top</span>
<svg class=a style='left:192.5px;top:863.5px;' width='7.2' height='6' viewBox='0 0 7.2 6'><path d='M0 0H7.2L3.6 6Z' fill='#5a5a5a'/></svg>
<div class=a style='left:209px;top:858.5px;width:1px;height:15.5px;background:#cdcdcd;'></div>
<svg class=a style='left:219.5px;top:860.5px;' width='16.6' height='11.4' viewBox='0 0 16.6 11.4'><path d='M8.3 0Q13.6 0 16.6 5.7Q13.6 11.4 8.3 11.4Q3 11.4 0 5.7Q3 0 8.3 0Z' fill='#6b6b6b'/><circle cx='8.3' cy='5.7' r='3.6' fill='#f3f3f3'/><circle cx='8.3' cy='5.7' r='2.2' fill='#6b6b6b'/></svg>
<div class=a style='left:246px;top:858.5px;width:1px;height:15.5px;background:#cdcdcd;'></div>
<div class=a style='left:254px;top:857px;width:301px;height:19px;background:#fff;'></div>
<span class=t style='left:258.3px;top:856.5px;font-size:12px;color:#7a7a7a;letter-spacing:0.30px;'>Filter</span>
<span class=t style='left:563.6px;top:856.5px;font-size:12px;color:#4d4d4d;letter-spacing:0.19px;'>Default levels</span>
<svg class=a style='left:643.3px;top:863px;' width='7.2' height='6' viewBox='0 0 7.2 6'><path d='M0 0H7.2L3.6 6Z' fill='#5a5a5a'/></svg>
<div class=a style='left:1388px;top:858.5px;width:1px;height:15.5px;background:#cdcdcd;'></div>
<svg class=a style='left:1400.1px;top:859.1px;' width='13.8' height='13.8' viewBox='0 0 13.8 13.8'><path d='M5.47 0.15L8.33 0.15L8.43 2.03L10.36 3.14L12.03 2.28L13.46 4.77L11.88 5.79L11.88 8.01L13.46 9.03L12.03 11.52L10.36 10.66L8.43 11.77L8.33 13.65L5.47 13.65L5.37 11.77L3.44 10.66L1.77 11.52L0.34 9.03L1.92 8.01L1.92 5.79L0.34 4.77L1.77 2.28L3.44 3.14L5.37 2.03Z' fill='#6b6b6b' stroke='#6b6b6b' stroke-width='.5' stroke-linejoin='round'/><circle cx='6.9' cy='6.9' r='2.48' fill='#f3f3f3'/></svg>
<div class=a style='left:1408px;top:880px;width:15px;height:149px;background:#f1f1f1;'></div>
<svg class=a style='left:1411.5px;top:886px;' width='8' height='4.5' viewBox='0 0 8 4.5'><path d='M0 4.5L4 0 8 4.5Z' fill='#505050'/></svg>
<svg class=a style='left:1411.5px;top:1018.5px;' width='8' height='4.5' viewBox='0 0 8 4.5'><path d='M0 0L4 4.5 8 0Z' fill='#a3a3a3'/></svg>
<div class=a style='left:1410px;top:897px;width:11px;height:116.5px;background:#c1c1c1;'></div>
<div class=a style='left:0px;top:880px;width:1408px;height:56px;background:#fff0f0;'></div>
<div class=a style='left:0px;top:897px;width:1408px;height:1px;background:#ffd6d6;'></div>
<svg class=a style='left:7px;top:883px;' width='10' height='10' viewBox='0 0 10 10'><circle cx='5' cy='5' r='5' fill='#e0363e'/><path d='M3.3 3.3L6.7 6.7M6.7 3.3L3.3 6.7' stroke='#fff' stroke-width='1.5' fill='none'/></svg>
<span class='t m' style='left:24.2px;top:878.7px;color:#fd0000'>Failed to load resource: net::ERR_BLOCKED_BY_CLIENT</span>
<span class='t m' style='right:43.7px;top:878.7px;color:#545454;text-decoration:underline'>counter:1</span>
<div class=a style='left:0px;top:916px;width:1408px;height:1px;background:#ffd6d6;'></div>
<div class=a style='left:10px;top:900.2px;width:15px;height:14px;background:#d3222b;border-radius:7px'></div>
<span class=t style='left:14.2px;top:897.4px;font-size:11px;font-weight:700;color:#fff;'>2</span>
<span class='t m' style='left:29px;top:897.7px;color:#fd0000'>Failed to load resource: net::ERR_BLOCKED_BY_CLIENT</span>
<span class='t m' style='right:43.7px;top:897.7px;color:#545454;text-decoration:underline'>an.yandex.ru/system/context.js:1</span>
<div class=a style='left:0px;top:935px;width:1408px;height:1px;background:#ffd6d6;'></div>
<svg class=a style='left:7px;top:921px;' width='10' height='10' viewBox='0 0 10 10'><circle cx='5' cy='5' r='5' fill='#e0363e'/><path d='M3.3 3.3L6.7 6.7M6.7 3.3L3.3 6.7' stroke='#fff' stroke-width='1.5' fill='none'/></svg>
<span class='t m' style='left:24.2px;top:916.7px;color:#fd0000'>Failed to load resource: net::ERR_BLOCKED_BY_CLIENT</span>
<span class='t m' style='right:43.7px;top:916.7px;color:#545454;text-decoration:underline'>top-fwz1.mail.ru/js/code.js:1</span>
<span class='t m' style='left:24px;top:935.7px'><span style='color:#a71a93'>function</span><span style='color:#33383f'> </span><span style='color:#2a22b4'>f</span><span style='color:#33383f'>(</span><span style='color:#2a22b4'>a</span><span style='color:#33383f'>,</span><span style='color:#2a22b4'>b</span><span style='color:#33383f'>){</span><span style='color:#a71a93'>var</span><span style='color:#33383f'> </span><span style='color:#2a22b4'>z</span><span style='color:#33383f'>,</span><span style='color:#2a22b4'>y</span></span>
<span class='t m' style='left:24px;top:948.8px'><span style='color:#a71a93'>for</span><span style='color:#33383f'>(</span><span style='color:#2a22b4'>z</span><span style='color:#9a5b12'>=</span><span style='color:#c42a23'>""</span><span style='color:#33383f'>,</span><span style='color:#2a22b4'>y</span><span style='color:#9a5b12'>=</span><span style='color:#2a22b4'>0</span><span style='color:#33383f'>;</span><span style='color:#2a22b4'>y</span><span style='color:#9a5b12'>&lt;</span><span style='color:#2a22b4'>a</span><span style='color:#33383f'>;</span><span style='color:#9a5b12'>++</span><span style='color:#2a22b4'>y</span><span style='color:#33383f'>)</span><span style='color:#2a22b4'>z</span><span style='color:#9a5b12'>+=</span><span style='color:#2a22b4'>b</span><span style='color:#9a5b12'>+</span><span style='color:#c42a23'>", "</span></span>
<span class='t m' style='left:24px;top:961.9px'><span style='color:#a71a93'>return</span><span style='color:#33383f'> </span><span style='color:#2a22b4'>z</span><span style='color:#33383f'>}</span></span>
<span class='t m' style='left:24px;top:974.8px'><span style='color:#33383f'>alert( f(</span><span style='color:#2a22b4'>4</span><span style='color:#33383f'>, </span><span style='color:#c42a23'>&#39;Строка&#39;</span><span style='color:#33383f'>) );</span></span>
<svg class=a style='left:9.8px;top:941.4px;' width='5.6' height='8' viewBox='0 0 5.6 8'><path d='M.7 .7L4.6 4 .7 7.3' fill='none' stroke='#8a8a8a' stroke-width='1.3'/></svg>
<div class=a style='left:0px;top:992px;width:1408px;height:1px;background:#efefef;'></div>
<svg class=a style='left:9.8px;top:999px;' width='5.6' height='8' viewBox='0 0 5.6 8'><path d='M.7 .7L4.6 4 .7 7.3' fill='none' stroke='#3b7cf0' stroke-width='1.5'/></svg>
<div class=a style='left:0px;top:0px;width:1423px;height:64px;background:linear-gradient(#5a564c 0,#66625a 1px,#5a564b 2.2px,#413f3b 29px,#3c3b37 29.6px,#403f3a 30.6px,#403f3a 63px,#373632 64px);border-radius:5px 5px 0 0'></div>
<svg class=a style='left:4.4px;top:5.4px;' width='19' height='19' viewBox='0 0 19 19'><defs><radialGradient id='gc' cx='.5' cy='.3' r='.8'><stop offset='0' stop-color='#f58758'/><stop offset='1' stop-color='#dc4e1b'/></radialGradient></defs><g transform='translate(9.5 9.5)'><circle r='8.6' fill='#35251d'/><circle r='7.8' fill='url(#gc)'/><path d='M-3.2-3.2L3.2 3.2M3.2-3.2L-3.2 3.2' stroke='#3a1a0b' stroke-width='1.05' fill='none'/></g></svg>
<svg class=a style='left:24.5px;top:5.4px;' width='19' height='19' viewBox='0 0 19 19'><defs><linearGradient id='gg' x1='0' y1='0' x2='0' y2='1'><stop offset='0' stop-color='#8f8c84'/><stop offset='1' stop-color='#63615a'/></linearGradient></defs><g transform='translate(9.5 9.5)'><circle r='8.6' fill='#33322e'/><circle r='7.8' fill='url(#gg)'/><path d='M-3.8 .6H3.8' stroke='#3f3e39' stroke-width='1.1' fill='none'/></g></svg>
<svg class=a style='left:44.5px;top:5.4px;' width='19' height='19' viewBox='0 0 19 19'><defs><linearGradient id='gg' x1='0' y1='0' x2='0' y2='1'><stop offset='0' stop-color='#8f8c84'/><stop offset='1' stop-color='#63615a'/></linearGradient></defs><g transform='translate(9.5 9.5)'><circle r='8.6' fill='#33322e'/><circle r='7.8' fill='url(#gg)'/><rect x='-3.4' y='-3.4' width='6.8' height='6.8' stroke='#3f3e39' stroke-width='1.05' fill='none'/></g></svg>
<span class=t style='left:237px;top:5px;font-size:15px;font-weight:700;color:#dfdbd2;letter-spacing:-0.11px;text-shadow:0 -1px 0 rgba(0,0,0,.45);'>Скрипт, повторяющий строку, пока не выполнится условие. | Форум RUDTP.RU — дизайн, верстка, препресс, печать – Chromium</span>
<svg class=a style='left:0px;top:29px;' width='270' height='35' viewBox='0 0 270 35'><path d='M5 35Q13 35 13 27V9Q13 .8 21 .8H244Q252 .8 252 9V27Q252 35 260 35Z' fill='#f2f1f0'/></svg>
<svg class=a style='left:25px;top:39px;' width='16' height='16' viewBox='0 0 16 16'><rect width='16' height='16' fill='#34495e'/><circle cx='2.2' cy='3' r='1.9' fill='#f00'/><g fill='none' stroke='#fff' stroke-width='1'><path d='M5.5 2.5V10.5H2.8Q1.5 10.5 1.5 9V7.3Q1.5 6 2.8 6H5.5'/><path d='M8.3 2V9.2Q8.3 10.5 9.5 10.5H10.8M6.5 6H10'/><path d='M10.8 15.5V6H13Q14.5 6 14.5 7.3V9Q14.5 10.5 13 10.5H10.8'/></g></svg>
<div class=a style='left:49.5px;top:36px;width:180px;height:24px;overflow:hidden;-webkit-mask-image:linear-gradient(90deg,#000 156px,transparent 177px);mask-image:linear-gradient(90deg,#000 156px,transparent 177px)'><span class=t style='left:0px;top:0.6px;font-size:15.5px;color:#3b3a38;letter-spacing:0.10px;'>Скрипт, повторяющий строку, пока не</span></div>
<svg class=a style='left:232.5px;top:42.5px;' width='9' height='9' viewBox='0 0 9 9'><path d='M.7.7L8.3 8.3M8.3.7L.7 8.3' stroke='#3c3b39' stroke-width='1.5' fill='none'/></svg>
<svg class=a style='left:265px;top:40px;' width='14' height='14' viewBox='0 0 14 14'><g fill='#e8e6e1'><path d='M0 2.2Q3.3 1 6.5 2.6V12.6Q3.3 11 0 12.2Z'/><path d='M14 2.2Q10.7 1 7.5 2.6V12.6Q10.7 11 14 12.2Z'/></g><g stroke='#3f3e3a' stroke-width='1' fill='none'><path d='M2 5V9.5M4 4.5Q5 5.5 4 9.5M9.5 5Q11.5 4 11.3 6Q11 7.5 9.5 9.5H12'/></g></svg>
<span class=t style='left:288.3px;top:36.5px;font-size:15px;color:#dfdbd2;'>缘起</span>
<span class=t style='left:320.8px;top:36.5px;font-size:15px;color:#dfdbd2;'>·</span>
<span class=t style='left:328.4px;top:36.5px;font-size:15px;color:#dfdbd2;'>《</span>
<span class=t style='left:343.4px;top:36.5px;font-size:15px;color:#dfdbd2;letter-spacing:0.73px;'>Flutter</span>
<span class=t style='left:391.2px;top:36.5px;font-size:15px;color:#dfdbd2;'>实战》</span>
<svg class=a style='left:471.1px;top:42.5px;' width='9' height='9' viewBox='0 0 9 9'><path d='M.7.7L8.3 8.3M8.3.7L.7 8.3' stroke='#a3a09a' stroke-width='1.5' fill='none'/></svg>
<div class=a style='left:491px;top:38px;width:1px;height:19px;background:#6a6862;'></div>
<svg class=a style='left:506.9px;top:40.5px;' width='13' height='13' viewBox='0 0 13 13'><path d='M6.5 .5V12.5M.5 6.5H12.5' stroke='#f4f3f1' stroke-width='1.7' fill='none'/></svg>
<div class=a style='left:0px;top:64px;width:1423px;height:37px;background:#f2f1f0;'></div>
<div class=a style='left:0px;top:101px;width:1423px;height:1px;background:#c9c7c3;'></div>
<svg class=a style='left:15px;top:75px;' width='14' height='14' viewBox='0 0 14 14'><path d='M14 6.2H3.4L8.1 1.5 7 .4 .4 7 7 13.6 8.1 12.5 3.4 7.8H14Z' fill='#4a4a48'/></svg>
<svg class=a style='left:47px;top:75px;' width='14' height='14' viewBox='0 0 14 14'><g transform='translate(14 0) scale(-1 1)'><path d='M14 6.2H3.4L8.1 1.5 7 .4 .4 7 7 13.6 8.1 12.5 3.4 7.8H14Z' fill='#b4b3b0'/></g></svg>
<svg class=a style='left:79px;top:75px;' width='14.2' height='14' viewBox='0 0 14.2 14'><path d='M12.1 2A7 7 0 1 0 13.9 8.7H12.1A5.3 5.3 0 1 1 10.8 3.2L8 6H14.2V-.2Z' fill='#4a4a48'/></svg>
<div class=a style='left:108px;top:69px;width:997px;height:28px;background:#edeff1;border-radius:14px'></div>
<svg class=a style='left:121.5px;top:76.5px;' width='9' height='12' viewBox='0 0 9 12'><path d='M1 5H8Q9 5 9 6V10.5Q9 11.5 8 11.5H1Q0 11.5 0 10.5V6Q0 5 1 5Z' fill='#5f6266'/><path d='M2.2 5.3V3.3Q2.2 .8 4.5 .8 6.8 .8 6.8 3.3V5.3' fill='none' stroke='#5f6266' stroke-width='1.5'/></svg>
<span class=t style='left:142px;top:72.5px;font-size:15px;color:#6b6f74;letter-spacing:0.25px;'>https://</span>
<span class=t style='left:189px;top:72.5px;font-size:15px;color:#1f2023;letter-spacing:-0.16px;'>forum.rudtp.ru</span>
<span class=t style='left:281px;top:72.5px;font-size:15px;color:#7a8088;letter-spacing:-0.21px;'>/threads/skript-povtorjajuschij-stroku-poka-ne-vypolnitsja-uslovie.72463/</span>
<svg class=a style='left:1080.5px;top:75.5px;' width='15' height='15' viewBox='0 0 15 15'><path d='M7.5 1.2L9.4 5.6 14.2 6 10.6 9.2 11.7 13.9 7.5 11.4 3.3 13.9 4.4 9.2 .8 6 5.6 5.6Z' fill='none' stroke='#505255' stroke-width='1.4' stroke-linejoin='round'/></svg>
<svg class=a style='left:1122px;top:77px;' width='15' height='13' viewBox='0 0 15 13'><path d='M2.4 0H12.6Q15 0 14.8 2.4L13.8 9.6Q13.4 13 10.2 13H4.8Q1.6 13 1.2 9.6L.2 2.4Q0 0 2.4 0Z' fill='#8b8b8b'/><path d='M7.5 1.6A2.95 2.95 0 0 1 9.1 7L9.5 11.2H5.5L5.9 7A2.95 2.95 0 0 1 7.5 1.6Z' fill='#f4f3f2'/></svg>
<svg class=a style='left:1154px;top:75px;' width='17' height='16' viewBox='0 0 17 16'><path d='M6 2.9H14.6Q16.1 2.9 16.1 4.4V14Q16.1 15.5 14.6 15.5H9.6Z' fill='#dcddde'/><path d='M1.4 0H7.6L11.2 13.2H1.4Q0 13.2 0 11.8V1.4Q0 0 1.4 0Z' fill='#4a8af4'/><path d='M8.2 13.2H11.2L10.2 15.5Z' fill='#3a62c8'/><text x='1.9' y='9.6' font-size='7.6' font-weight='700' fill='#fff' font-family='Liberation Sans'>G</text><g stroke='#4f7180' stroke-width='.95' fill='none'><path d='M10.4 7.2H15.4M12.9 5.9V7.2M14.6 7.2Q13.6 10.6 10.8 12.4M11.6 8.6Q12.9 11.2 15.1 12.4'/></g></svg>
<svg class=a style='left:1187px;top:75.5px;' width='14' height='15' viewBox='0 0 14 15'><g fill='#050505'><ellipse cx='10.6' cy='2.9' rx='2.2' ry='2.9' transform='rotate(22 10.6 2.9)'/><ellipse cx='5.9' cy='2.4' rx='1.25' ry='1.65' transform='rotate(10 5.9 2.4)'/><ellipse cx='3.4' cy='3.9' rx='1' ry='1.35'/><ellipse cx='1.8' cy='5.9' rx='.9' ry='1.15' transform='rotate(-20 1.8 5.9)'/><path d='M7.2 5.5C3.5 5.5 2.2 8.3 2.4 10.4C2.6 13 4.8 14.8 7.4 14.8C10 14.8 11.8 13.2 11.4 11.6C11 10.2 9.2 10.8 8.2 11.4C7.2 12 6.2 11.4 6.4 10.4C6.6 9.2 8.6 9.4 10.2 9C12.6 8.4 12.2 5.5 7.2 5.5Z'/></g></svg>
<svg class=a style='left:1219px;top:75px;' width='14' height='15.5' viewBox='0 0 14 15.5'><path d='M7 0Q10 1.9 13.9 2.1V7.6Q13.9 12.8 7 15.5Q.1 12.8 .1 7.6V2.1Q4 1.9 7 0Z' fill='#800006'/><text x='1.9' y='9.8' font-size='7' font-weight='400' fill='#fff' font-family='Liberation Sans' letter-spacing='-.3'>uo</text></svg>
<div class=a style='left:1228px;top:85px;width:12px;height:11.8px;background:#5f6267;border-radius:2px'></div>
<span class=t style='left:1231px;top:81px;font-size:10.5px;color:#fff;'>4</span>
<svg class=a style='left:1249.8px;top:75px;' width='17' height='16' viewBox='0 0 17 16'><path d='M2.8 0H10.2L14.2 3.6V15H2.8Z' fill='#fcfcfc' stroke='#e2e2e2' stroke-width='.5'/><path d='M10.2 0V3.6H14.2Z' fill='#e4e4e4'/><path d='M2.8 13H14.2V15H2.8Z' fill='#dfe6d8'/><path d='M.1 6.2Q8.2 4.6 16.2 6.2Q16.9 12.4 12.2 12.2Q9.6 12 8.2 9.8Q6.8 12 4.2 12.2Q-.5 12.4 .1 6.2Z' fill='#3e191c'/><ellipse cx='4.9' cy='8.7' rx='2' ry='1.05' fill='#ece6e6'/><ellipse cx='11.7' cy='8.7' rx='2' ry='1.05' fill='#ece6e6'/></svg>
<svg class=a style='left:1282.4px;top:74.6px;' width='17' height='16' viewBox='0 0 17 16'><path d='M4.7 12.4V2.6H13.3V11.6' fill='none' stroke='#141414' stroke-width='4.3' stroke-linejoin='round' stroke-linecap='round'/><ellipse cx='3.2' cy='12.7' rx='3.2' ry='2.9' fill='#141414'/><ellipse cx='11.8' cy='11.9' rx='3.2' ry='2.9' fill='#141414'/><path d='M4.7 12.4V2.6H13.3V11.6' fill='none' stroke='#f6f5f4' stroke-width='1.7' stroke-linejoin='round' stroke-linecap='round'/><ellipse cx='3.2' cy='12.7' rx='1.75' ry='1.45' fill='#f6f5f4'/><ellipse cx='11.8' cy='11.9' rx='1.75' ry='1.45' fill='#f6f5f4'/></svg>
<svg class=a style='left:1314px;top:76.4px;' width='16' height='14' viewBox='0 0 16 14'><path d='M8 8.4C5.4 6 5.3 .9 8 .9C10.7 .9 10.6 6 8 8.4' fill='none' stroke='#1b66d6' stroke-width='1.8'/><path d='M7 7.2L9 9.2Q5.2 12.6 1.6 13.4L.1 10.9Q4 10.4 7 7.2Z' fill='#1b66d6'/><path d='M9 7.2L7 9.2Q10.8 12.6 14.4 13.4L15.9 10.9Q12 10.4 9 7.2Z' fill='#1b66d6'/></svg>
<div class=a style='left:1346px;top:75px;width:1px;height:16px;background:#c9c7c3;'></div>
<div class=a style='left:1358.8px;top:72px;width:20px;height:20px;background:#0d5aa2;border-radius:50%'></div>
<span class=t style='left:1364.9px;top:72.2px;font-size:11.5px;color:#fff;'>R</span>
<svg class=a style='left:1399.5px;top:76px;' width='4' height='14' viewBox='0 0 4 14'><circle cx='2' cy='1.7' r='1.6' fill='#4a4a48'/><circle cx='2' cy='6.6' r='1.6' fill='#4a4a48'/><circle cx='2' cy='11.5' r='1.6' fill='#4a4a48'/></svg>
<div class=a style='left:487px;top:98.5px;width:448.5px;height:160.5px;background:#f2f1f0;border-radius:0 0 3px 3px;box-shadow:0 1px 6px rgba(0,0,0,.45),0 0 0 1px rgba(0,0,0,.18)'></div>
<span class=t style='left:503px;top:117.8px;font-size:17.5px;color:#333332;letter-spacing:0.40px;'>Подтвердите действие на странице</span>
<span class=t style='left:503px;top:142.8px;font-size:17.5px;color:#333332;letter-spacing:0.86px;'>forum.rudtp.ru</span>
<span class=t style='left:503px;top:174.3px;font-size:15px;color:#2f2f2e;letter-spacing:0.14px;'>Строка, Строка, Строка, Строка,</span>
<div class=a style='left:854.5px;top:210.5px;width:65px;height:33px;background:#ee7544;border-radius:3px;box-shadow:0 0 0 1px #e06a3b inset'></div>
<span class=t style='left:876.5px;top:217px;font-size:14.5px;font-weight:700;color:#fff;letter-spacing:-0.38px;'>OK</span>
</body></html>
